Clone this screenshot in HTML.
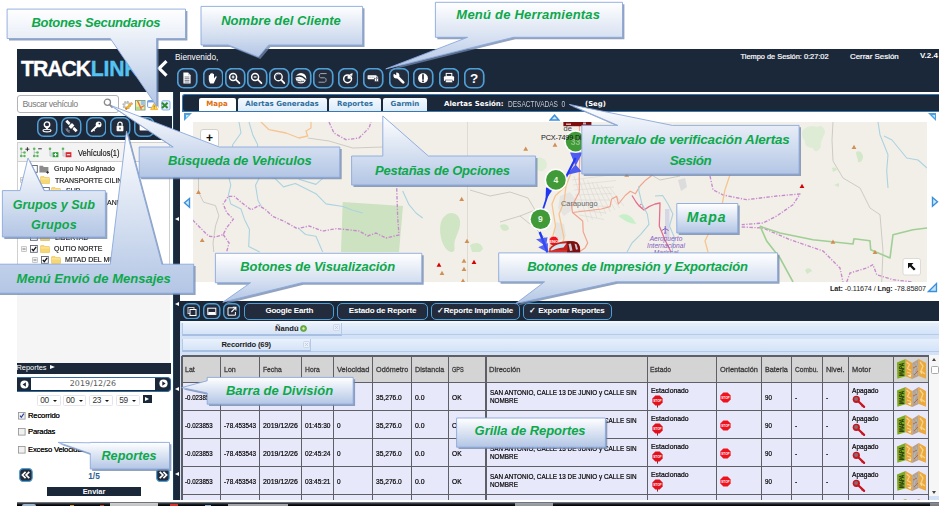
<!DOCTYPE html>
<html lang="es">
<head>
<meta charset="utf-8">
<title>TrackLink - Plataforma</title>
<style>
*{box-sizing:border-box;margin:0;padding:0}
html,body{width:941px;height:509px;overflow:hidden;background:#fff}
body{position:relative;font-family:"Liberation Sans",sans-serif;font-size:8px;color:#000}
.abs{position:absolute}
.navy{background:#1b283a}
#hdr{left:17px;top:49px;width:922px;height:43px}
#logo{left:21px;top:57.300px;font-weight:bold;font-size:21.200px;line-height:24px;color:#fff;letter-spacing:-1.050px;white-space:nowrap;-webkit-text-stroke:.35px currentColor}
#logo b{color:#55c3f1;letter-spacing:-.2px;margin-left:.8px}
.wt{color:#fff;white-space:nowrap}
.tb{position:absolute;top:68px;width:20px;height:20.5px;border:1.5px solid #4e9fd6;border-radius:6.5px;background:#232c3c}
.tb svg{position:absolute;left:0;top:0;width:17px;height:17.5px}
.lb{position:absolute;top:117px;width:20.5px;height:20px;border:1.5px solid #4e9fd6;border-radius:6.5px;background:#232c3c}
.lb svg{position:absolute;left:0;top:0;width:17.5px;height:17px}
.tab{position:absolute;top:98px;height:12.5px;border-radius:2px 2px 0 0;background:linear-gradient(#f4f9ff,#dcebfa);font-family:"DejaVu Sans","Liberation Sans",sans-serif;font-weight:bold;font-size:7.050px;line-height:12.500px;text-align:center;color:#2e6e9e;white-space:nowrap}
.tri{position:absolute;width:0;height:0}
</style>
</head>
<body>
<!-- header -->
<div id="hdr" class="abs navy"></div>
<div id="logo" class="abs">TRACK<b>LINK</b></div>
<svg class="abs" style="left:156px;top:60px" width="12" height="17" viewBox="0 0 12 17"><path d="M10.5 1.2 L3.2 8.3 L10.5 15.6" fill="none" stroke="#fff" stroke-width="3.2"/></svg>
<div class="abs wt" style="left:175px;top:52px;font-size:8.3px;line-height:10px">Bienvenido,</div>
<div class="abs wt" style="left:740.500px;top:51.900px;font-size:7.400px;line-height:10px;-webkit-text-stroke:.2px #fff">Tiempo de Sesión: 0:27:02</div>
<div class="abs wt" style="left:850px;top:52.400px;font-size:7.900px;line-height:10px;-webkit-text-stroke:.2px #fff">Cerrar Sesión</div>
<div class="abs wt" style="left:920px;top:51px;font-size:8px;line-height:10px;font-weight:bold">V.2.4</div>
<!--TOOLBAR-->
<svg class="abs" style="left:177px;top:68px" width="20.5" height="20.5" viewBox="0 0 20.5 20.5"><rect x=".75" y=".75" width="19" height="19" rx="6" fill="#232c3c" stroke="#4e9fd6" stroke-width="1.700"/><path d="M6.4 4.6h4.6l2.6 2.6v8.2H6.4z" fill="#fff"/><path d="M11 4.6v2.6h2.6" fill="#c9ccd2"/><path d="M7.6 9h4.8M7.6 10.7h4.8M7.6 12.4h4.8M7.6 14h4.8" stroke="#5a6270" stroke-width=".8"/></svg>
<svg class="abs" style="left:202.7px;top:68px" width="20.5" height="20.5" viewBox="0 0 20.5 20.5"><rect x=".75" y=".75" width="19" height="19" rx="6" fill="#232c3c" stroke="#4e9fd6" stroke-width="1.700"/><path d="M7.3 15.6c-.7-1.3-1.3-2.5-1.5-4.2V7.6c0-.9 1.1-.9 1.2 0V6.200c0-1 1.300-1 1.300 0V5.500c0-1 1.400-1 1.400 0v.8c0-.9 1.300-.9 1.300 0v4.300l1.500-2c.6-.7 1.500-.2 1.100.6l-2 4.300c-.3.800-.6 1.500-1 2.100z" fill="#fff"/></svg>
<svg class="abs" style="left:225px;top:68px" width="20.5" height="20.5" viewBox="0 0 20.5 20.5"><rect x=".75" y=".75" width="19" height="19" rx="6" fill="#232c3c" stroke="#4e9fd6" stroke-width="1.700"/><circle cx="8.100" cy="9" r="3.500" fill="none" stroke="#fff" stroke-width="1.500"/><path d="M10.900 11.700l3.500 3.500" stroke="#fff" stroke-width="1.800" stroke-linecap="round"/><path d="M6.700 9h2.800M8.100 7.600v2.800" stroke="#fff" stroke-width="1.100"/></svg>
<svg class="abs" style="left:247px;top:68px" width="20.5" height="20.5" viewBox="0 0 20.5 20.5"><rect x=".75" y=".75" width="19" height="19" rx="6" fill="#232c3c" stroke="#4e9fd6" stroke-width="1.700"/><circle cx="8.100" cy="9" r="3.500" fill="none" stroke="#fff" stroke-width="1.500"/><path d="M10.900 11.700l3.500 3.500" stroke="#fff" stroke-width="1.800" stroke-linecap="round"/><path d="M6.700 9h2.800" stroke="#fff" stroke-width="1.300"/></svg>
<svg class="abs" style="left:269px;top:68px" width="20.5" height="20.5" viewBox="0 0 20.5 20.5"><rect x=".75" y=".75" width="19" height="19" rx="6" fill="#232c3c" stroke="#4e9fd6" stroke-width="1.700"/><circle cx="9.400" cy="8.900" r="3.800" fill="none" stroke="#fff" stroke-width="1.400"/><path d="M12.300 11.900l3 3.300" stroke="#fff" stroke-width="1.800" stroke-linecap="round"/><path d="M6.900 7.800c.8-1.500 2.600-2 4-1.300" stroke="#9aa3b0" stroke-width=".8" fill="none"/></svg>
<svg class="abs" style="left:291px;top:68px" width="20.5" height="20.5" viewBox="0 0 20.5 20.5"><rect x=".75" y=".75" width="19" height="19" rx="6" fill="#232c3c" stroke="#4e9fd6" stroke-width="1.700"/><circle cx="10" cy="10.300" r="5.300" fill="#fff"/><path d="M5 8.900c3-1.500 7-.6 9.800 2.800" stroke="#232c3c" stroke-width="1.300" fill="none"/><path d="M5.500 12.900c2.500 1.200 5.300 1.200 7.600.2" stroke="#232c3c" stroke-width=".9" fill="none"/><path d="M5.300 10.700c2.200 0 4 .7 6.300 2.300" stroke="#98a1ae" stroke-width=".7" fill="none"/></svg>
<svg class="abs" style="left:313.2px;top:68px" width="20.5" height="20.5" viewBox="0 0 20.5 20.5"><rect x=".75" y=".75" width="19" height="19" rx="6" fill="#232c3c" stroke="#4e9fd6" stroke-width="1.700"/><path d="M13.6 5.600H7.800c-2 0-2 4.200 0 4.200h3.800c2 0 2 4.400 0 4.400H5.600" stroke="#a3a8b2" stroke-width="1" fill="none"/></svg>
<svg class="abs" style="left:337.8px;top:68px" width="20.5" height="20.5" viewBox="0 0 20.5 20.5"><rect x=".75" y=".75" width="19" height="19" rx="6" fill="#232c3c" stroke="#4e9fd6" stroke-width="1.700"/><circle cx="9.600" cy="10.800" r="3.900" fill="none" stroke="#fff" stroke-width="1.500"/><path d="M9.600 10.800V7.400a3.400 3.400 0 0 1 3.400 3.400z" fill="#fff"/><path d="M11.600 6.200l3-1.300-.5 3.300z" fill="#fff"/></svg>
<svg class="abs" style="left:363.3px;top:68px" width="20.5" height="20.5" viewBox="0 0 20.5 20.5"><rect x=".75" y=".75" width="19" height="19" rx="6" fill="#232c3c" stroke="#4e9fd6" stroke-width="1.700"/><rect x="4.600" y="7.200" width="8.800" height="4" rx=".6" fill="#fff"/><path d="M5.600 9.200h6.800" stroke="#8d95a3" stroke-width=".9" stroke-dasharray="1.100 .5"/><rect x="11.600" y="10.200" width="3.800" height="3.400" fill="#fff" stroke="#232c3c" stroke-width=".5"/><path d="M12.400 10.200v-.9c0-1.400 2.200-1.400 2.200 0v.9" stroke="#fff" stroke-width=".8" fill="none"/><circle cx="13.500" cy="11.900" r=".55" fill="#232c3c"/></svg>
<svg class="abs" style="left:388.5px;top:68px" width="20.5" height="20.5" viewBox="0 0 20.5 20.5"><rect x=".75" y=".75" width="19" height="19" rx="6" fill="#232c3c" stroke="#4e9fd6" stroke-width="1.700"/><path d="M8 8.200l6.200 6.200" stroke="#fff" stroke-width="2.700" stroke-linecap="round"/><circle cx="7.400" cy="7.600" r="3" fill="#fff"/><path d="M7.200 7.400L3.600 6l2.600-3.400z" fill="#232c3c" transform="rotate(12 7.400 7.600)"/></svg>
<svg class="abs" style="left:413.4px;top:68px" width="20.5" height="20.5" viewBox="0 0 20.5 20.5"><rect x=".75" y=".75" width="19" height="19" rx="6" fill="#232c3c" stroke="#4e9fd6" stroke-width="1.700"/><circle cx="10" cy="10.200" r="4.900" fill="#fff"/><path d="M10 6.800v4.300" stroke="#232c3c" stroke-width="1.700" stroke-linecap="round"/><circle cx="10" cy="13.300" r=".95" fill="#232c3c"/></svg>
<svg class="abs" style="left:438.9px;top:68px" width="20.5" height="20.5" viewBox="0 0 20.5 20.5"><rect x=".75" y=".75" width="19" height="19" rx="6" fill="#232c3c" stroke="#4e9fd6" stroke-width="1.700"/><rect x="7.200" y="5.400" width="5.600" height="3" fill="none" stroke="#fff" stroke-width="1"/><rect x="4.900" y="8.200" width="10.200" height="4.800" rx="1" fill="#fff"/><rect x="6.600" y="12" width="6.800" height="2.600" fill="#fff" stroke="#232c3c" stroke-width=".5"/></svg>
<svg class="abs" style="left:464.3px;top:68px" width="20.5" height="20.5" viewBox="0 0 20.5 20.5"><rect x=".75" y=".75" width="19" height="19" rx="6" fill="#232c3c" stroke="#4e9fd6" stroke-width="1.700"/><text x="10" y="15.200" text-anchor="middle" font-family="Liberation Sans,sans-serif" font-weight="bold" font-size="13.500" fill="#fff">?</text></svg>
<!--/TOOLBAR-->
<!-- left panel -->
<div class="abs" style="left:17px;top:94.5px;width:102px;height:18px;border:1.5px solid #b3b3b3;border-radius:3px;background:#fff"></div>
<div class="abs" style="left:22.500px;top:98.800px;font-size:8.800px;line-height:11px;color:#7a7a7a;letter-spacing:-.5px">Buscar vehículo</div>
<svg class="abs" style="left:102px;top:97px" width="12" height="12" viewBox="0 0 12 12"><circle cx="5.4" cy="5.3" r="3.1" fill="none" stroke="#8a8a8a" stroke-width="1.3"/><path d="M7.6 7.6 L10.6 10.6" stroke="#8a8a8a" stroke-width="1.6"/></svg>
<!--SMALLICONS-->
<svg class="abs" style="left:121.500px;top:99.500px" width="12" height="11" viewBox="0 0 12 11"><circle cx="4.800" cy="5.200" r="3.600" fill="#c9c9c9" stroke="#b5b5b5" stroke-width="1.600" stroke-dasharray="1.500 1.300"/><circle cx="4.800" cy="5.200" r="1.500" fill="#fff"/><path d="M3.600 9.200L10 3.200" stroke="#f0b323" stroke-width="2.300"/><path d="M3.600 9.200L5 8" stroke="#d9822b" stroke-width="2.300"/><path d="M9 4.100L10.400 2.800" stroke="#e8a0a0" stroke-width="2.300"/></svg>
<svg class="abs" style="left:134.800px;top:99.800px" width="11" height="11" viewBox="0 0 11 11"><rect x=".5" y=".5" width="9.500" height="9.500" fill="#d9efb0" stroke="#7f9c7a" stroke-width=".9"/><rect x="6" y="1" width="3.600" height="4" fill="#9cc3f0"/><rect x="1" y="1" width="3" height="5" fill="#f4ec8e"/><rect x="1" y="6.800" width="4" height="2.800" fill="#b5e08a"/><path d="M2.600 1L5.600 7.600L9.500 5.500M5.600 7.600L6.400 9.600" stroke="#f26b3c" stroke-width="1.300" fill="none"/></svg>
<svg class="abs" style="left:147.300px;top:100.300px" width="12" height="11" viewBox="0 0 12 11"><rect x=".6" y=".6" width="8.600" height="6.800" rx=".8" fill="#fff" stroke="#6f9fe0" stroke-width="1"/><rect x=".6" y=".6" width="8.600" height="1.800" fill="#6f9fe0"/><path d="M7.200 3.200L10.800 9.600H3.600z" fill="#ffd84a" stroke="#f2a52a" stroke-width=".8" stroke-linejoin="round"/><path d="M7.200 5.400v2.200M7.200 8.300v.6" stroke="#7a5a10" stroke-width=".8"/></svg>
<svg class="abs" style="left:160.800px;top:99.800px" width="10" height="11" viewBox="0 0 10 11"><rect x=".7" y=".7" width="8.300" height="9.300" rx="1.800" fill="#e1edfb" stroke="#8fb4e8" stroke-width="1.100"/><path d="M1 2.800L6.600 8M6.600 2.800L1 8" stroke="#2e8b2e" stroke-width="2"/></svg>
<!--/SMALLICONS-->
<div class="abs navy" style="left:17px;top:115.5px;width:155px;height:24.5px"></div>
<!--LEFTBTNS-->
<svg class="abs" style="left:37px;top:117px" width="20.500" height="20" viewBox="0 0 20.500 20"><rect x=".75" y=".75" width="19" height="18.500" rx="6" fill="#232c3c" stroke="#4e9fd6" stroke-width="1.500"/><circle cx="10" cy="7.600" r="2.700" fill="none" stroke="#fff" stroke-width="1.400"/><path d="M7.800 9.200L10 13.200L12.200 9.200" fill="#fff"/><ellipse cx="10" cy="13.600" rx="4" ry="1.300" fill="none" stroke="#fff" stroke-width="1.100"/></svg>
<svg class="abs" style="left:61.4px;top:117px" width="20.500" height="20" viewBox="0 0 20.500 20"><rect x=".75" y=".75" width="19" height="18.500" rx="6" fill="#232c3c" stroke="#4e9fd6" stroke-width="1.500"/><g transform="rotate(45 10.500 9)"><rect x="8.800" y="6.600" width="3.400" height="4.800" fill="#fff"/><rect x="3.200" y="7.600" width="4.600" height="2.800" fill="#fff"/><rect x="13.200" y="7.600" width="4.600" height="2.800" fill="#fff"/><path d="M7.800 9h1M12.200 9h1" stroke="#fff" stroke-width=".8"/></g><path d="M5 11.500c0 2.200 1.600 3.800 3.800 3.800M6.400 11.200c0 1.600 1 2.600 2.600 2.600" stroke="#8a929f" stroke-width=".8" fill="none"/><path d="M5 11.600c.2 2 1.600 3.400 3.600 3.600l-1.800-3z" fill="#7a828f"/></svg>
<svg class="abs" style="left:85.8px;top:117px" width="20.500" height="20" viewBox="0 0 20.500 20"><rect x=".75" y=".75" width="19" height="18.500" rx="6" fill="#232c3c" stroke="#4e9fd6" stroke-width="1.500"/><circle cx="12.600" cy="7.400" r="2.900" fill="#fff"/><circle cx="13.400" cy="6.600" r=".9" fill="#232c3c"/><path d="M11 9L5.800 14.200" stroke="#fff" stroke-width="1.900" stroke-linecap="round"/><path d="M7.400 12.800l1.300 1.300" stroke="#fff" stroke-width="1.200"/></svg>
<svg class="abs" style="left:110px;top:117px" width="20.500" height="20" viewBox="0 0 20.500 20"><rect x=".75" y=".75" width="19" height="18.500" rx="6" fill="#232c3c" stroke="#4e9fd6" stroke-width="1.500"/><rect x="6.600" y="8.800" width="6.800" height="5.400" rx=".6" fill="#fff"/><path d="M7.900 8.800V7.200c0-2.700 4.200-2.700 4.200 0v1.600" fill="none" stroke="#fff" stroke-width="1.300"/><rect x="9.400" y="10.600" width="1.200" height="1.800" fill="#232c3c"/></svg>
<svg class="abs" style="left:134.4px;top:117px" width="20.500" height="20" viewBox="0 0 20.500 20"><rect x=".75" y=".75" width="19" height="18.500" rx="6" fill="#232c3c" stroke="#4e9fd6" stroke-width="1.500"/><rect x="5.600" y="6.400" width="8.800" height="7" rx=".6" fill="#fff"/><path d="M5.800 6.800L10 10.400L14.200 6.800" stroke="#232c3c" stroke-width=".9" fill="none"/></svg>
<!--/LEFTBTNS-->
<!-- tree -->
<div class="abs" style="left:17px;top:142px;width:153px;height:220px;background:#fff;border:1px solid #d0d0d0"></div>
<div class="abs" style="left:17px;top:142px;width:153px;height:20px;background:#f3f3f3;border:1px solid #cfcfcf"></div>
<div class="abs" style="left:17px;top:270px;width:153px;height:92.500px;background:#f5f5f5"></div>
<!--TREE-->
<style>.tt{font-size:7.900px;line-height:10px;color:#111;white-space:nowrap;transform:scaleX(.885);transform-origin:0 50%;margin-top:.9px;-webkit-text-stroke:.15px #111}</style>
<svg class="abs" style="left:19px;top:146.500px" width="11" height="11" viewBox="0 0 11 11"><path d="M2.200 2v7M2.200 5.500h3.300M2.200 9h3.300" stroke="#9aa" stroke-width=".6" fill="none"/><circle cx="2.200" cy="1.800" r="1.300" fill="#5cb85c"/><circle cx="5.500" cy="5.500" r="1.300" fill="#5cb85c"/><circle cx="2.200" cy="9" r="1.300" fill="#5cb85c"/><circle cx="5.500" cy="9" r="1.200" fill="#5cb85c"/><path d="M6.400 2.200h4M8.400 .2v4" stroke="#222" stroke-width=".9"/></svg>
<svg class="abs" style="left:31.5px;top:146.500px" width="11" height="11" viewBox="0 0 11 11"><path d="M2.200 2v7M2.200 5.500h3.300M2.200 9h3.300" stroke="#9aa" stroke-width=".6" fill="none"/><circle cx="2.200" cy="1.800" r="1.300" fill="#5cb85c"/><circle cx="5.500" cy="5.500" r="1.300" fill="#5cb85c"/><circle cx="2.200" cy="9" r="1.300" fill="#5cb85c"/><circle cx="5.500" cy="9" r="1.200" fill="#5cb85c"/><path d="M6.200 1.800h3.600" stroke="#222" stroke-width=".9"/></svg>
<svg class="abs" style="left:48px;top:146.500px" width="11" height="11" viewBox="0 0 11 11"><path d="M2 2v7h2" stroke="#9aa" stroke-width=".6" fill="none"/><circle cx="2" cy="1.800" r="1.300" fill="#5cb85c"/><path d="M2.600 4.600l2.200 2.200l-2.200 2.200z" fill="#c9d4e4"/><rect x="4.600" y="5.200" width="5.800" height="5" fill="#2e9e3a"/><path d="M5.800 7.700h3.400M7.500 6v3.400" stroke="#fff" stroke-width="1"/></svg>
<svg class="abs" style="left:60.5px;top:146.500px" width="11" height="11" viewBox="0 0 11 11"><path d="M2 2v7h2" stroke="#9aa" stroke-width=".6" fill="none"/><circle cx="2" cy="1.800" r="1.300" fill="#5cb85c"/><path d="M2.600 4.600l2.200 2.200l-2.200 2.200z" fill="#c9d4e4"/><rect x="4.600" y="5.200" width="5.800" height="5" fill="#d9262c"/><path d="M5.800 7.700h3.400" stroke="#fff" stroke-width="1.100"/></svg>
<div class="abs" style="left:78.300px;top:148.100px;-webkit-text-stroke:.15px #111;font-size:8.300px;line-height:10px;color:#1a1a1a;white-space:nowrap;transform:scaleX(.9);transform-origin:0 50%">Vehículos(1)</div>
<svg class="abs" style="left:29.5px;top:164.5px" width="8" height="8" viewBox="0 0 8 8"><rect x=".5" y=".5" width="6.800" height="6.800" fill="#fff" stroke="#5b6470" stroke-width=".9"/></svg>
<svg class="abs" style="left:39px;top:164.500px" width="11" height="9" viewBox="0 0 11 9"><path d="M.4 .8h3.400l1 1.100h4.600v5.700H.4z" fill="#8c8c8c"/><path d="M8.600 6v2.800M7.200 7.400h2.800" stroke="#222" stroke-width=".8"/></svg>
<div class="abs tt" style="left:53.8px;top:163.3px;">Grupo No Asignado</div>
<svg class="abs" style="left:19.5px;top:177px" width="6" height="6" viewBox="0 0 6 6"><rect x=".4" y=".4" width="5.200" height="5.200" rx=".8" fill="#f4f4f4" stroke="#a9a9a9" stroke-width=".7"/><path d="M1.500 3h3" stroke="#555" stroke-width=".8"/></svg>
<svg class="abs" style="left:29.5px;top:176px" width="8" height="8" viewBox="0 0 8 8"><rect x=".5" y=".5" width="6.800" height="6.800" fill="#fff" stroke="#5b6470" stroke-width=".9"/></svg>
<svg class="abs" style="left:39.8px;top:176px" width="10" height="8" viewBox="0 0 10 8"><path d="M.5 1.200c0-.5.300-.8.800-.8h2.600l1 1.100h4c.4 0 .7.300.7.700v4.900c0 .4-.3.700-.7.700H1.200c-.4 0-.7-.3-.7-.7z" fill="#f7d774" stroke="#e2b93b" stroke-width=".5"/><path d="M.8 2.900h8.500" stroke="#fff5c8" stroke-width=".7" opacity=".9"/></svg>
<div class="abs tt" style="left:54.5px;top:174.9px;">TRANSPORTE CILIND</div>
<svg class="abs" style="left:42px;top:186.5px" width="8" height="8" viewBox="0 0 8 8"><rect x=".5" y=".5" width="6.800" height="6.800" fill="#fff" stroke="#5b6470" stroke-width=".9"/></svg>
<svg class="abs" style="left:51px;top:186.8px" width="10" height="8" viewBox="0 0 10 8"><path d="M.5 1.200c0-.5.300-.8.800-.8h2.600l1 1.100h4c.4 0 .7.300.7.700v4.900c0 .4-.3.700-.7.700H1.200c-.4 0-.7-.3-.7-.7z" fill="#f7d774" stroke="#e2b93b" stroke-width=".5"/><path d="M.8 2.900h8.500" stroke="#fff5c8" stroke-width=".7" opacity=".9"/></svg>
<div class="abs tt" style="left:65.7px;top:185.6px;">SUB</div>
<svg class="abs" style="left:42px;top:198px" width="8" height="8" viewBox="0 0 8 8"><rect x=".5" y=".5" width="6.800" height="6.800" fill="#fff" stroke="#5b6470" stroke-width=".9"/></svg>
<svg class="abs" style="left:51px;top:198.3px" width="10" height="8" viewBox="0 0 10 8"><path d="M.5 1.200c0-.5.300-.8.800-.8h2.600l1 1.100h4c.4 0 .7.300.7.700v4.900c0 .4-.3.700-.7.700H1.200c-.4 0-.7-.3-.7-.7z" fill="#f7d774" stroke="#e2b93b" stroke-width=".5"/><path d="M.8 2.900h8.500" stroke="#fff5c8" stroke-width=".7" opacity=".9"/></svg>
<div class="abs tt" style="left:106.500px;top:197px;">ANE</div>
<svg class="abs" style="left:30px;top:233px" width="8" height="8" viewBox="0 0 8 8"><rect x=".5" y=".5" width="6.800" height="6.800" fill="#fff" stroke="#5b6470" stroke-width=".9"/></svg>
<svg class="abs" style="left:39.5px;top:233.3px" width="10" height="8" viewBox="0 0 10 8"><path d="M.5 1.200c0-.5.300-.8.800-.8h2.600l1 1.100h4c.4 0 .7.300.7.700v4.900c0 .4-.3.700-.7.700H1.200c-.4 0-.7-.3-.7-.7z" fill="#e9cf7a" stroke="#caa43a" stroke-width=".5"/><path d="M.8 2.900h8.500" stroke="#fff5c8" stroke-width=".7" opacity=".9"/></svg>
<div class="abs tt" style="left:54.5px;top:232px;">LIBERTAD</div>
<svg class="abs" style="left:20.5px;top:245.5px" width="6" height="6" viewBox="0 0 6 6"><rect x=".4" y=".4" width="5.200" height="5.200" rx=".8" fill="#f4f4f4" stroke="#a9a9a9" stroke-width=".7"/><path d="M1.500 3h3" stroke="#555" stroke-width=".8"/></svg>
<svg class="abs" style="left:29.5px;top:244.5px" width="8" height="8" viewBox="0 0 8 8"><rect x=".5" y=".5" width="6.800" height="6.800" fill="#fff" stroke="#5b6470" stroke-width=".9"/><path d="M1.800 3.800L3.300 5.600L6.200 1.800" fill="none" stroke="#111" stroke-width="1.300"/></svg>
<svg class="abs" style="left:39.5px;top:244.8px" width="10" height="8" viewBox="0 0 10 8"><path d="M.5 1.200c0-.5.300-.8.800-.8h2.600l1 1.100h4c.4 0 .7.300.7.700v4.900c0 .4-.3.700-.7.700H1.200c-.4 0-.7-.3-.7-.7z" fill="#f7d774" stroke="#e2b93b" stroke-width=".5"/><path d="M.8 2.900h8.500" stroke="#fff5c8" stroke-width=".7" opacity=".9"/></svg>
<div class="abs tt" style="left:54.2px;top:243.3px;">QUTIO NORTE</div>
<svg class="abs" style="left:31.5px;top:256.5px" width="6" height="6" viewBox="0 0 6 6"><rect x=".4" y=".4" width="5.200" height="5.200" rx=".8" fill="#f4f4f4" stroke="#a9a9a9" stroke-width=".7"/><path d="M1.500 3h3" stroke="#555" stroke-width=".8"/></svg>
<svg class="abs" style="left:40.5px;top:255.5px" width="8" height="8" viewBox="0 0 8 8"><rect x=".5" y=".5" width="6.800" height="6.800" fill="#fff" stroke="#5b6470" stroke-width=".9"/><path d="M1.800 3.800L3.300 5.600L6.200 1.800" fill="none" stroke="#111" stroke-width="1.300"/></svg>
<svg class="abs" style="left:50.5px;top:255.8px" width="10" height="8" viewBox="0 0 10 8"><path d="M.5 1.200c0-.5.300-.8.800-.8h2.600l1 1.100h4c.4 0 .7.300.7.700v4.900c0 .4-.3.700-.7.700H1.200c-.4 0-.7-.3-.7-.7z" fill="#f7d774" stroke="#e2b93b" stroke-width=".5"/><path d="M.8 2.900h8.500" stroke="#fff5c8" stroke-width=".7" opacity=".9"/></svg>
<div class="abs tt" style="left:65.3px;top:254.2px;">MITAD DEL MU</div>
<!--/TREE-->
<!-- reportes panel -->
<div class="abs navy" style="left:17px;top:362.5px;width:155px;height:11px"></div>
<div class="abs wt" style="left:16.500px;top:362.800px;font-size:7.400px;line-height:10px">Reportes</div>
<div class="tri" style="left:50px;top:365.300px;border-left:5.200px solid #fff;border-top:2.900px solid transparent;border-bottom:2.900px solid transparent"></div>
<!--REPORTS-->
<div class="abs" style="left:17px;top:376.500px;width:153.500px;height:15px;background:#1b283a;border:1.200px solid #2f6da3;border-left:none;border-radius:0 4px 4px 0"></div>
<div class="abs" style="left:31px;top:378px;width:124px;height:12px;background:#fff;font-family:'DejaVu Sans','Liberation Sans',sans-serif;font-size:7.900px;line-height:12px;text-align:center;color:#555;letter-spacing:.1px">2019/12/26</div>
<svg class="abs" style="left:19.500px;top:379.500px" width="9" height="9" viewBox="0 0 9 9"><circle cx="4.500" cy="4.500" r="4.100" fill="#fff"/><path d="M5.900 2.300v4.400L2.600 4.500z" fill="#1b283a"/></svg>
<svg class="abs" style="left:158.600px;top:379.200px" width="9" height="9" viewBox="0 0 9 9"><circle cx="4.500" cy="4.500" r="4.100" fill="#fff"/><path d="M3.300 2.300v4.400L6.600 4.500z" fill="#1b283a"/></svg>
<div class="abs" style="left:37px;top:395px;width:23.500px;height:11.300px;border:1px solid #e4e4ee;border-radius:1.500px;background:#fff;font-size:8.300px;line-height:9.500px;color:#333;padding-left:2.200px;letter-spacing:-.3px">00</div>
<div class="tri" style="left:52.8px;top:399.800px;border-top:2.600px solid #111;border-left:2.200px solid transparent;border-right:2.200px solid transparent"></div>
<div class="abs" style="left:62.7px;top:395px;width:23.500px;height:11.300px;border:1px solid #e4e4ee;border-radius:1.500px;background:#fff;font-size:8.300px;line-height:9.500px;color:#333;padding-left:2.200px;letter-spacing:-.3px">00</div>
<div class="tri" style="left:78.5px;top:399.800px;border-top:2.600px solid #111;border-left:2.200px solid transparent;border-right:2.200px solid transparent"></div>
<div class="abs" style="left:89.3px;top:395px;width:23.500px;height:11.300px;border:1px solid #e4e4ee;border-radius:1.500px;background:#fff;font-size:8.300px;line-height:9.500px;color:#333;padding-left:2.200px;letter-spacing:-.3px">23</div>
<div class="tri" style="left:105.1px;top:399.800px;border-top:2.600px solid #111;border-left:2.200px solid transparent;border-right:2.200px solid transparent"></div>
<div class="abs" style="left:116px;top:395px;width:23.500px;height:11.300px;border:1px solid #e4e4ee;border-radius:1.500px;background:#fff;font-size:8.300px;line-height:9.500px;color:#333;padding-left:2.200px;letter-spacing:-.3px">59</div>
<div class="tri" style="left:131.8px;top:399.800px;border-top:2.600px solid #111;border-left:2.200px solid transparent;border-right:2.200px solid transparent"></div>
<div class="abs navy" style="left:142.500px;top:394.700px;width:9px;height:8.800px"></div><div class="tri" style="left:145.200px;top:396.700px;border-left:4.400px solid #fff;border-top:2.400px solid transparent;border-bottom:2.400px solid transparent"></div>
<svg class="abs" style="left:18px;top:411.90000000000003px" width="8" height="8" viewBox="0 0 8 8"><rect x=".5" y=".5" width="6.600" height="6.600" fill="#f1f1f1" stroke="#8e8f8f" stroke-width=".8"/><path d="M2 3.600L3.300 5.400L5.800 1.600" fill="none" stroke="#2b3f9c" stroke-width="1.100"/></svg>
<div class="abs" style="left:28px;top:411.0px;font-size:7.600px;line-height:10px;color:#111;white-space:nowrap;text-shadow:0 0 .2px #111;letter-spacing:-.15px">Recorrido</div>
<svg class="abs" style="left:18px;top:428.3px" width="8" height="8" viewBox="0 0 8 8"><rect x=".5" y=".5" width="6.600" height="6.600" fill="#f1f1f1" stroke="#8e8f8f" stroke-width=".8"/></svg>
<div class="abs" style="left:28px;top:427.4px;font-size:7.600px;line-height:10px;color:#111;white-space:nowrap;text-shadow:0 0 .2px #111;letter-spacing:-.15px">Paradas</div>
<svg class="abs" style="left:18px;top:445.6px" width="8" height="8" viewBox="0 0 8 8"><rect x=".5" y=".5" width="6.600" height="6.600" fill="#f1f1f1" stroke="#8e8f8f" stroke-width=".8"/></svg>
<div class="abs" style="left:28px;top:444.7px;font-size:7.600px;line-height:10px;color:#111;white-space:nowrap;text-shadow:0 0 .2px #111;letter-spacing:-.15px">Exceso Velocidad</div>
<svg class="abs" style="left:19px;top:468px" width="14" height="14" viewBox="0 0 14 14"><rect x=".6" y=".6" width="12.600" height="12.800" rx="3.600" fill="#232c3c" stroke="#4e9fd6" stroke-width="1.200"/><path d="M6.600 3.800L3.400 7L6.600 10.200M10.300 3.800L7.100 7L10.300 10.200" fill="none" stroke="#fff" stroke-width="1.700"/></svg>
<svg class="abs" style="left:155.600px;top:468px" width="14" height="14" viewBox="0 0 14 14"><rect x=".6" y=".6" width="12.600" height="12.800" rx="3.600" fill="#232c3c" stroke="#4e9fd6" stroke-width="1.200"/><path d="M3.700 3.800L6.900 7L3.700 10.200M7.400 3.800L10.600 7L7.400 10.200" fill="none" stroke="#fff" stroke-width="1.700"/></svg>
<div class="abs" style="left:84px;top:470.500px;width:20px;text-align:center;font-weight:bold;font-size:8.300px;line-height:10px;color:#2c5f92">1/5</div>
<div class="abs navy wt" style="left:47px;top:487px;width:94px;height:8.700px;font-weight:bold;font-size:7.400px;line-height:9.800px;text-align:center">Enviar</div>
<!--/REPORTS-->
<!-- vertical divider -->
<div class="abs" style="left:172.200px;top:92px;width:1.200px;height:50px;background:#fff"></div><div class="abs" style="left:170.500px;top:140px;width:3px;height:362px;background:#fff"></div>
<div class="abs navy" style="left:173.300px;top:92px;width:6.500px;height:410px;border-left:1px solid #173f5f"></div>
<!--DIVARROWS-->
<div class="tri" style="left:174.800px;top:217px;border-right:4.300px solid #fff;border-top:2.800px solid transparent;border-bottom:2.800px solid transparent"></div><div class="tri" style="left:174.800px;top:302.400px;border-right:4.300px solid #fff;border-top:2.800px solid transparent;border-bottom:2.800px solid transparent"></div><div class="tri" style="left:174.800px;top:386.900px;border-right:4.300px solid #fff;border-top:2.800px solid transparent;border-bottom:2.800px solid transparent"></div><div class="tri" style="left:174.800px;top:472.200px;border-right:4.300px solid #fff;border-top:2.800px solid transparent;border-bottom:2.800px solid transparent"></div>
<!--/DIVARROWS-->
<!-- tab bar -->
<div class="abs" style="left:179.800px;top:91.700px;width:759.200px;height:2px;background:#fff"></div><div class="abs" style="left:181.500px;top:93.600px;width:757.500px;height:18.200px;background:#3a78b0;border-radius:2.500px 0 0 0"></div>
<div class="abs navy" style="left:183.200px;top:95px;width:755.800px;height:15.500px;border-radius:2px 0 0 2px"></div>
<div class="tab" style="left:198.5px;width:37px;color:#e0700f;background:#fff">Mapa</div>
<div class="tab" style="left:237.5px;width:89px">Alertas Generadas</div>
<div class="tab" style="left:329px;width:52px">Reportes</div>
<div class="tab" style="left:383px;width:44px">Garmin</div>
<div class="abs wt" style="left:444px;top:98.500px;font-family:'DejaVu Sans','Liberation Sans',sans-serif;font-weight:bold;font-size:7px;line-height:11px">Alertas Sesión:</div>
<div class="abs" style="left:507.500px;top:98.500px;font-size:8.400px;line-height:11px;color:#c4cad3;white-space:nowrap;transform:scaleX(.78);transform-origin:0 50%">DESACTIVADAS&nbsp; 0</div>
<div class="abs wt" style="left:585px;top:98.500px;font-family:'DejaVu Sans','Liberation Sans',sans-serif;font-weight:bold;font-size:6.900px;line-height:11px">(Seg)</div>
<!--MAP-->
<svg class="abs" style="left:193px;top:122px" width="734" height="160" viewBox="193 122 734 160"><rect x="193" y="122" width="734" height="160" fill="#f2efe9"/>
<path d="M342.7 202 L403 206 L399 252 L341 252z" fill="#cde2c0"/>
<path d="M441 222c3-9 12-12 17-6c5 7 0 16-3 24c-2 7 2 12-4 12c-8-2-13-18-10-30z" fill="#cfe5c4"/>
<path d="M470 245c6-4 12-2 13 4l-3 3h-8z M500 225c5-2 9 0 9 4c-3 3-8 3-9-4z" fill="#d3e8c9"/>
<path d="M803 130c4-4 10-5 14-3c5-3 8 2 8 6c-2 5-5 9-4 14c-3 5-7 6-8 1c-4 0-9-2-8-7c-3-3-4-8-2-11z" fill="#d9ebd0" opacity=".8"/>
<path d="M856 152c3-2 6 0 7 4c0 4-2 7-5 6c0-4-2-6-2-10z M832 168c3-1 5 0 5 2l-4 2z M834 185l5-2l0 4z M805 270c3-3 6-2 7 1l-5 3z" fill="#d3e8c9"/>
<path d="M574.0 176.0L588.0 222 M578.5 177.5L592.5 220 M583.0 179.0L597.0 218 M587.5 180.5L601.5 216 M592.0 182.0L606.0 214 M596.5 183.5L610.5 212 M601.0 185.0L615.0 210 M605.5 186.5L619.5 208 M610.0 188.0L624.0 206 M572 180L618 174.0 M573 185L616 180.5 M574 190L614 187.0 M575 195L612 193.5 M576 200L610 200.0 M577 205L608 206.5 M578 210L606 213.0 M579 215L604 219.5" fill="none" stroke="#dad7d2" stroke-width=".6"/>
<path d="M560 196l10-4l6 8l-4 10l-8 6l-6-8z M556 222l8 2l2 12l-8 6l-4-10z" fill="#e6e4e1"/>
<path d="M678 180l7-2l2 9l-6 4z" fill="#dcdcdc"/>
<path d="M665 209h4.500v29h-4.500z" fill="#d6d6e6"/>
<path d="M618.400 216c5-3 10-2 14 2l4 6c-6 0-12-3-18-8z" fill="#c8f0c8"/>
<path d="M533 160c4-4 10-3 13 1c2 4 0 9-4 10c-5 1-10-5-9-11z" fill="#d8ecd0" opacity=".8"/>
<path d="M467.500 122V282" stroke="#dedbd5" stroke-width="1"/>
<path d="M307.7 138 L329 141 L352.7 148 L383 147" fill="none" stroke="#c4c0ba" stroke-width=".8"/>
<path d="M198.5 160 L198.5 178.4 L198.5 192 L203.6 202.2 L215.5 205.6 L218.9 215.8 L215.5 226 L213 243 L213.8 252" fill="none" stroke="#c4c0ba" stroke-width=".8"/>
<path d="M833 122 L832 140 L833 161 L843 178 L860 188 L870 208 L880 214.7 L883 251 L881.7 282" fill="none" stroke="#c4c0ba" stroke-width=".8"/>
<path d="M470 190 L490 196 L510 192 L528 198 L535 210 L520 216 L500 222" fill="none" stroke="#c4c0ba" stroke-width=".8"/>
<path d="M520 216 L535 228 L545 238" fill="none" stroke="#c4c0ba" stroke-width=".8"/>
<path d="M600 160 L620 170 L640 168 L660 180 L680 176" fill="none" stroke="#c4c0ba" stroke-width=".8"/>
<path d="M239 122 L241 133 L232.7 144.7 L231 160 L229.1 178.4 L230.8 185.2 L228.3 195.4 L230.8 203.9 L241 209 L244.4 219.2 L249.5 229.4 L248.7 246.4 L259.7 252" fill="none" stroke="#aad3df" stroke-width="1.100" stroke-linejoin="round"/>
<path d="M249 122 L252.7 134.7 L257.7 144.7 L255 165 L258.9 178.4 L255.5 185.2 L258 200.5 L261.4 206.5" fill="none" stroke="#aad3df" stroke-width="1.100" stroke-linejoin="round"/>
<path d="M266 176 L275 178.4 L283.5 186.9 L295.4 183.5 L315.9 193.7 L326 203.9 L343 206.5 L352 210 L362.7 213" fill="none" stroke="#aad3df" stroke-width="1.100" stroke-linejoin="round"/>
<path d="M298.8 179.3 L315.9 184.4 L322.7 178.4" fill="none" stroke="#aad3df" stroke-width="1.100" stroke-linejoin="round"/>
<path d="M298.8 228.6 L305.6 234.5 L315.9 236.2 L322.7 252" fill="none" stroke="#aad3df" stroke-width="1.100" stroke-linejoin="round"/>
<path d="M402.7 191 L409 204.7 L416 213 L422.7 218" fill="none" stroke="#aad3df" stroke-width="1.100" stroke-linejoin="round"/>
<path d="M878 122 L880 134.7 L888 154.7 L886.7 171 L888 188" fill="none" stroke="#aad3df" stroke-width="1.100" stroke-linejoin="round"/>
<path d="M884 136 L892 140 L906.7 158 L918 160 L927 168" fill="none" stroke="#aad3df" stroke-width="1.100" stroke-linejoin="round"/>
<path d="M193 150 L200 160 L196 175" fill="none" stroke="#aad3df" stroke-width="1.100" stroke-linejoin="round"/>
<path d="M640 122 L648 135 L660 140" fill="none" stroke="#aad3df" stroke-width="1.100" stroke-linejoin="round"/>
<path d="M192.6 220 L200.2 227.7 L208.7 236.2 L215.5 237 L223.2 234.5 L226.6 227.7 L233.4 219.2 L226.6 212.4 L223.2 203.9 L228.3 196.3 L234.2 196.3 L241 202.2 L251.2 209.9 L258.9 205.6 L264.8 209 L273.3 216.7 L285.2 221.8 L297.1 228.6 L309 226 L322.7 231.1 L336.3 228.6 L349 229.8 L359 231 L367.7 236 L376 233 L386 238 L399 235 L397.7 218 L396.7 188" fill="none" stroke="#c78bcd" stroke-width="1.350" stroke-dasharray="3.500 1.500 1.200 1.500" stroke-linejoin="round"/>
<path d="M223.2 234.5 L229.1 243 L226.6 252" fill="none" stroke="#c78bcd" stroke-width="1.350" stroke-dasharray="3.500 1.500 1.200 1.500" stroke-linejoin="round"/>
<path d="M329 122 L334 133 L346 139.7 L359 138 L369 128 L371 122" fill="none" stroke="#c78bcd" stroke-width="1.350" stroke-dasharray="3.500 1.500 1.200 1.500" stroke-linejoin="round"/>
<path d="M710 176 L713 189.7 L723 195 L746.7 199.7 L776.7 196 L800 194 L793 204.7 L776.7 216 L763 223 L741.7 224.7" fill="none" stroke="#c78bcd" stroke-width="1.350" stroke-dasharray="3.500 1.500 1.200 1.500" stroke-linejoin="round"/>
<path d="M741.7 227 L763 228 L790 239.7 L823 251 L840 268 L843 282" fill="none" stroke="#c78bcd" stroke-width="1.350" stroke-dasharray="3.500 1.500 1.200 1.500" stroke-linejoin="round"/>
<path d="M846.7 282 L850 273 L866.7 268 L873 264.7 L876.7 274.7 L893 279.7 L913 282" fill="none" stroke="#c78bcd" stroke-width="1.350" stroke-dasharray="3.500 1.500 1.200 1.500" stroke-linejoin="round"/>
<path d="M760 226.3 L780 233 L813 239.7 L853 244 L854 238.7 L870 240.7 L870.7 249.7 L890 258 L893 234.7 L913 229.7 L927 228" fill="none" stroke="#9fcf94" stroke-width="1.600" stroke-linejoin="round"/>
<path d="M760 226 L766.7 241 L780 258 L793 282" fill="none" stroke="#9fcf94" stroke-width="1.600"/>
<path d="M261 122 L269 129.7 L286 133 L299 138 L307.7 136 L306 131 L311 128 L311 122" fill="none" stroke="#f6c58f" stroke-width="1.300" stroke-linejoin="round"/>
<path d="M576 160 L566 186 L555.5 195.5 L552 204 L555.5 226 L548.7 252" fill="none" stroke="#f6c58f" stroke-width="1.300" stroke-linejoin="round"/>
<path d="M566 186 L564 202 L559 214 L561.5 226 L564 238 L560 252" fill="none" stroke="#f6c58f" stroke-width="1.300" stroke-linejoin="round"/>
<path d="M730 174.7 L725 189.7 L722 205 L714 222 L705 241 L708 252" fill="none" stroke="#f6c58f" stroke-width="1.300" stroke-linejoin="round"/>
<path d="M579.3 122 L580 150 L579.3 170 L579.3 192 L571.7 206.6 L572.5 212.5 L582.7 221 L583.2 231.7 L587.7 242.9 L585 248 L579 252" fill="none" stroke="#f0a58e" stroke-width="1.200" stroke-linejoin="round"/>
<path d="M572.5 212.5 L601.4 209 L610 206.6 L611.6 199 L616.7 196.4 L618.4 204 L625.2 195.5 L630.3 191.3 L635.4 193.8 L640 186 L645.6 180.2 L652.4 175" fill="none" stroke="#f0a58e" stroke-width="1.200" stroke-linejoin="round"/>
<path d="M590 122 L592 135 L600 146" fill="none" stroke="#f0a58e" stroke-width="1.200" stroke-linejoin="round"/>
<path d="M632 195.5 L636 202 L638.8 205.7 L644 210 L649 206.6 L655 204 L660 203 L659.3 226 L665 240 L671 252" fill="none" stroke="#e2708e" stroke-width="1.300" stroke-linejoin="round"/>
<ellipse cx="641.600" cy="206.200" rx="1.300" ry="2.300" transform="rotate(-35 641.600 206.200)" fill="none" stroke="#e2708e" stroke-width=".9"/>
<path d="M638.8 186 L638.8 190.4 L642 204 L647.3 214 L649 224.4 L640.5 234.6 L632 243 L627 252" fill="none" stroke="#aad3df" stroke-width="1.100" stroke-linejoin="round"/>
<path d="M655 196 L662.7 195.5 L668 204 L672.9 214 L669.5 226 L674.6 238 L672 252" fill="none" stroke="#aad3df" stroke-width="1.100" stroke-linejoin="round"/>
<path d="M570 152.500L582.500 152.500L575.600 166z M575.600 164.500L581.500 171.500L566.500 175z" fill="#3a4cf5" opacity=".9"/><path d="M575.600 158L564 181" stroke="#2138f2" stroke-width="2.200"/>
<path d="M546 187.500L553.500 188.500L545.500 200z" fill="#2138f2"/><path d="M548 194L542.800 210" stroke="#2138f2" stroke-width="1.800"/>
<path d="M539.700 232L547.500 252.500" stroke="#2138f2" stroke-width="2.400"/><path d="M536 239.200L547.500 237.300L546 246.600z M538.200 247.300L547.900 242.900L547.900 252.500z" fill="#3a4cf5" opacity=".85"/>
<path d="M563.400 122h28v4.200h-28z" fill="#7d0e0e"/><path d="M566 123.500h5v1.600h-5z M583 122.500h3v2h-3z" fill="#e9d4d4" opacity=".8"/>
<circle cx="575.6" cy="141.6" r="11.300" fill="#fff" opacity=".92"/><circle cx="575.6" cy="141.6" r="9.800" fill="#3f9a37"/><text x="575.6" y="144.6" text-anchor="middle" font-family="Liberation Sans,sans-serif" font-size="8.600" font-weight="bold" fill="#e8f5e4" opacity="0.45">33</text>
<circle cx="555.9" cy="179.9" r="11.300" fill="#fff" opacity=".92"/><circle cx="555.9" cy="179.9" r="9.800" fill="#3f9a37"/><text x="555.9" y="182.9" text-anchor="middle" font-family="Liberation Sans,sans-serif" font-size="8.600" font-weight="bold" fill="#e8f5e4" opacity="1">4</text>
<circle cx="540.5" cy="219.3" r="11.300" fill="#fff" opacity=".92"/><circle cx="540.5" cy="219.3" r="9.800" fill="#3f9a37"/><text x="540.5" y="222.3" text-anchor="middle" font-family="Liberation Sans,sans-serif" font-size="8.600" font-weight="bold" fill="#e8f5e4" opacity="1">9</text>
<circle cx="553.800" cy="241" r="4.800" fill="#f0121d" stroke="#fff" stroke-width=".6"/><text x="553.800" y="242.500" text-anchor="middle" font-family="Liberation Sans,sans-serif" font-size="4.200" font-weight="bold" fill="#fff">ENO</text>
<path d="M549 252.500l.5-4c2-3 6-5.500 11-6.500c5-1 11-1.300 15-.2c3 1 4.500 4 4.700 7.200v3.500z" fill="#c4201c"/><path d="M550.500 249.500c2-3 6-5 10-5.800l6-.5l-3 4.300c-5 .5-9 1.500-12.500 3.500z" fill="#cfe6f5"/><path d="M566.500 241.800c4-.8 8-.5 10.500.7c2 1.500 3 4.500 3 7v3h-13c1-4 1-7-.5-10.700z" fill="#7d0f0f"/><path d="M568.500 244l2.500-.5l1.500 7l-2.500.5z M574.500 243.500l2 .8l1.500 5l-2 .5z" fill="#d5e8f4" opacity=".85"/><path d="M550 251h17" stroke="#e2453c" stroke-width="1"/>
<text x="541" y="139.600" font-family="Liberation Sans,sans-serif" font-size="7.300" fill="#151515" letter-spacing="-.2">PCX-7499 Dia</text>
<text x="563.500" y="130.500" font-family="Liberation Sans,sans-serif" font-size="7.500" fill="#444">de</text>
<text x="561" y="205.600" font-family="Liberation Sans,sans-serif" font-size="7.400" fill="#666">Carapungo</text>
<g font-family="Liberation Sans,sans-serif" font-size="6.600" font-style="italic" fill="#8461c4" text-anchor="middle"><text x="666" y="241.200">Aeropuerto</text><text x="666" y="248">Internacional</text><text x="666" y="254.800">Mariscal</text></g>
<path d="M665.200 226v7M661.800 230.500l3.400-2l3.400 2M664 233.200h2.400" stroke="#8461c4" stroke-width="1" fill="none"/>
<path d="M196.1 194L198.5 189.8L200.9 194z" fill="#d08f55"/>
<path d="M199.79999999999998 242.1L202.2 237.9L204.6 242.1z" fill="#d08f55"/>
<path d="M523.3000000000001 150.7L525.7 146.5L528.1 150.7z" fill="#d08f55"/>
<path d="M552.6 146.7L555 142.5L557.4 146.7z" fill="#d08f55"/>
<path d="M459.3 201L461.7 196.8L464.09999999999997 201z" fill="#d08f55"/>
<path d="M464.6 243L467 238.8L469.4 243z" fill="#d08f55"/>
<path d="M461.6 262.7L464 258.5L466.4 262.7z" fill="#d08f55"/>
<path d="M439.6 275L442 270.8L444.4 275z" fill="#d08f55"/>
<path d="M461.6 271L464 266.8L466.4 271z" fill="#d08f55"/>
<path d="M460.6 282.7L463 278.5L465.4 282.7z" fill="#d08f55"/>
<path d="M624.3000000000001 176.7L626.7 172.5L629.1 176.7z" fill="#d08f55"/>
<path d="M851.6 149L854 144.8L856.4 149z" fill="#d08f55"/>
<path d="M830.6 243.7L833 239.5L835.4 243.7z" fill="#d08f55"/>
<path d="M872.6 254L875 249.8L877.4 254z" fill="#d08f55"/>
<path d="M436.6 266.7L439 262.5L441.4 266.7z" fill="#d40000"/>
<path d="M471.6 264L474 259.8L476.4 264z" fill="#d40000"/>
<path d="M799.6 188L802 183.8L804.4 188z" fill="#d40000"/>
<rect x="200.500" y="129.500" width="18" height="18" rx="2.500" fill="#fff" stroke="#c9c6c0" stroke-width=".8"/><text x="209.600" y="142.300" text-anchor="middle" font-family="Liberation Sans,sans-serif" font-size="12" font-weight="bold" fill="#111">+</text>
<rect x="903" y="258.500" width="17.500" height="16.500" rx="2" fill="#fff" stroke="#d2cfca" stroke-width=".7"/><path d="M908 263h5.500l-1.900 1.900l4 4l-1.700 1.700l-4-4l-1.900 1.900z" fill="#111"/></svg>
<div class="tri" style="left:183.500px;top:113px;border-top:8px solid #4f9fe0;border-right:8.500px solid transparent"></div>
<div class="tri" style="left:185.800px;top:114.800px;border-top:3.600px solid #b9ecff;border-right:3.800px solid transparent"></div>
<div class="tri" style="left:927.500px;top:113px;border-top:8px solid #4f9fe0;border-left:8.500px solid transparent"></div>
<div class="tri" style="left:931.500px;top:114.800px;border-top:3.600px solid #b9ecff;border-left:3.800px solid transparent"></div>
<svg class="abs" style="left:548.500px;top:113.500px" width="11" height="7" viewBox="0 0 11 7"><path d="M1.200 6L5.500 1.200L9.800 6z" fill="#cfe9fb" stroke="#3c8fdb" stroke-width="1.500"/></svg>
<svg class="abs" style="left:182.500px;top:197px" width="8" height="12" viewBox="0 0 8 12"><path d="M6.500 1.500L1.500 5.800L6.500 10.200z" fill="#cfe9fb" stroke="#3c8fdb" stroke-width="1.400"/></svg>
<svg class="abs" style="left:931px;top:196px" width="8" height="12" viewBox="0 0 8 12"><path d="M1.500 1.500L6.500 5.800L1.500 10.200z" fill="#cfe9fb" stroke="#3c8fdb" stroke-width="1.400"/></svg>
<svg class="abs" style="left:927px;top:282px" width="11" height="11" viewBox="0 0 11 11"><path d="M9.500 1.500V9.500H1.500z" fill="#bfe3fb" stroke="#3c8fdb" stroke-width="1.300"/></svg>
<div class="abs" style="left:826px;top:283.500px;width:100px;text-align:right;font-size:7.200px;line-height:10px;color:#222;white-space:nowrap;letter-spacing:-.1px"><b>Lat:</b> -0.11674 / <b>Lng:</b> -78.85807</div>
<!--/MAP-->
<!--GRID-->
<style>.gh{font-size:7.700px;line-height:10px;color:#3c3c3c;white-space:nowrap;-webkit-text-stroke:.3px #3c3c3c;transform-origin:0 50%}.gc{font-size:7.700px;line-height:10px;color:#000;white-space:nowrap;transform-origin:0 50%;-webkit-text-stroke:.22px #000}</style><div class="abs" style="left:179.800px;top:321px;width:759.200px;height:181px;background:#d3e2f6"></div>
<div class="abs navy" style="left:179.800px;top:300.500px;width:759.200px;height:20.500px"></div>
<svg class="abs" style="left:182.8px;top:302.500px" width="17.500" height="16.500" viewBox="0 0 17.500 16.500"><rect x=".7" y=".7" width="16.100" height="15.100" rx="5" fill="#232c3c" stroke="#4e9fd6" stroke-width="1.400"/><rect x="5" y="4.500" width="6" height="6" fill="none" stroke="#c9ced6" stroke-width="1"/><rect x="7" y="6.500" width="6" height="6" fill="#232c3c" stroke="#fff" stroke-width="1"/></svg>
<svg class="abs" style="left:203px;top:302.500px" width="17.500" height="16.500" viewBox="0 0 17.500 16.500"><rect x=".7" y=".7" width="16.100" height="15.100" rx="5" fill="#232c3c" stroke="#4e9fd6" stroke-width="1.400"/><rect x="4.800" y="5.200" width="8" height="6.200" fill="none" stroke="#fff" stroke-width="1"/><rect x="5.300" y="9" width="7" height="2.400" fill="#fff"/></svg>
<svg class="abs" style="left:222.8px;top:302.500px" width="17.500" height="16.500" viewBox="0 0 17.500 16.500"><rect x=".7" y=".7" width="16.100" height="15.100" rx="5" fill="#232c3c" stroke="#4e9fd6" stroke-width="1.400"/><path d="M11 4.800H5v7.400h7.400V9" fill="none" stroke="#fff" stroke-width="1"/><path d="M8.400 9L12.600 4.600M9.800 4.300h3.100v3.100" fill="none" stroke="#fff" stroke-width="1.100"/></svg>
<div class="abs wt" style="left:244.3px;top:302.500px;width:90px;height:17px;border:1.500px solid #4e9fd6;border-radius:5px;background:#232c3c;font-weight:bold;font-size:8px;line-height:13.500px;text-align:center;letter-spacing:-.2px">Google Earth</div>
<div class="abs wt" style="left:337px;top:302.500px;width:91px;height:17px;border:1.500px solid #4e9fd6;border-radius:5px;background:#232c3c;font-weight:bold;font-size:8px;line-height:13.500px;text-align:center;letter-spacing:-.2px">Estado de Reporte</div>
<div class="abs wt" style="left:430.5px;top:302.500px;width:89px;height:17px;border:1.500px solid #4e9fd6;border-radius:5px;background:#232c3c;font-weight:bold;font-size:8px;line-height:13.500px;text-align:center;letter-spacing:-.2px">✓Reporte Imprimible</div>
<div class="abs wt" style="left:522.5px;top:302.500px;width:89px;height:17px;border:1.500px solid #4e9fd6;border-radius:5px;background:#232c3c;font-weight:bold;font-size:8px;line-height:13.500px;text-align:center;letter-spacing:-.2px">✓ Exportar Reportes</div>
<div class="abs" style="left:180.500px;top:321px;width:758.500px;height:1.500px;background:#f2f7fd"></div>
<div class="abs" style="left:182px;top:322.500px;width:757px;height:12.500px;background:linear-gradient(#e6effb,#d3e3f8);border-bottom:1px solid #b5cbe8"></div>
<div class="abs" style="left:182px;top:322.500px;width:160px;height:13px;background:linear-gradient(#e9f1fc,#d6e4f7);border:1px solid #b4c9e8;border-top:none;border-bottom:2px solid #a6bfe2"></div>
<div class="abs" style="left:275px;top:322.500px;font-weight:bold;font-size:7.600px;line-height:11px;color:#1a1a1a;white-space:nowrap">Ñandú</div>
<svg class="abs" style="left:299.500px;top:325px" width="7" height="7" viewBox="0 0 7 7"><circle cx="3.500" cy="3.500" r="3" fill="#6cb33e" stroke="#4b8a28" stroke-width=".6"/><circle cx="3.500" cy="3.500" r="1.200" fill="#d6efc4"/></svg>
<svg class="abs" style="left:333px;top:323.500px" width="7" height="7" viewBox="0 0 7 7"><rect x=".5" y=".5" width="6" height="6" rx="1" fill="#e9f0fb" stroke="#c3cfe2" stroke-width=".7"/><path d="M2 2l3 3M5 2l-3 3" stroke="#bcc7d8" stroke-width=".8"/></svg>
<div class="abs" style="left:182px;top:339px;width:757px;height:12.500px;background:linear-gradient(#e6effb,#d3e3f8);border-bottom:1px solid #b5cbe8"></div>
<div class="abs" style="left:182px;top:339px;width:128.700px;height:13px;background:linear-gradient(#e9f1fc,#d6e4f7);border:1px solid #b4c9e8;border-top:none;border-bottom:2px solid #a6bfe2"></div>
<div class="abs" style="left:221.500px;top:339.300px;font-weight:bold;font-size:7.600px;line-height:11px;color:#1a1a1a;white-space:nowrap;letter-spacing:-.15px">Recorrido (69)</div>
<svg class="abs" style="left:302.500px;top:340.500px" width="7" height="7" viewBox="0 0 7 7"><rect x=".5" y=".5" width="6" height="6" rx="1" fill="#e9f0fb" stroke="#c3cfe2" stroke-width=".7"/><path d="M2 2l3 3M5 2l-3 3" stroke="#bcc7d8" stroke-width=".8"/></svg>
<div class="abs" style="left:182px;top:355.5px;width:746.6px;height:26.899999999999977px;background:#d4d4d4"></div>
<div class="abs" style="left:182px;top:382.4px;width:746.6px;height:119.60000000000002px;background:#e8e8fb"></div>
<div class="abs gh" style="left:185.2px;top:364.8px;transform:scaleX(0.916)">Lat</div>
<div class="abs gh" style="left:223.6px;top:364.8px;transform:scaleX(0.919)">Lon</div>
<div class="abs gh" style="left:263.0px;top:364.8px;transform:scaleX(0.874)">Fecha</div>
<div class="abs gh" style="left:304.5px;top:364.8px;transform:scaleX(0.881)">Hora</div>
<div class="abs gh" style="left:336.7px;top:364.8px;transform:scaleX(0.973)">Velocidad</div>
<div class="abs gh" style="left:375.59999999999997px;top:364.8px;transform:scaleX(0.941)">Odómetro</div>
<div class="abs gh" style="left:414.8px;top:364.8px;transform:scaleX(0.925)">Distancia</div>
<div class="abs gh" style="left:451.5px;top:364.8px;transform:scaleX(0.726)">GPS</div>
<div class="abs gh" style="left:489.2px;top:364.8px;transform:scaleX(0.982)">Dirección</div>
<div class="abs gh" style="left:650.4000000000001px;top:364.8px;transform:scaleX(0.872)">Estado</div>
<div class="abs gh" style="left:719.8000000000001px;top:364.8px;transform:scaleX(0.965)">Orientación</div>
<div class="abs gh" style="left:764.6px;top:364.8px;transform:scaleX(0.939)">Bateria</div>
<div class="abs gh" style="left:794.7px;top:364.8px;transform:scaleX(0.861)">Combu.</div>
<div class="abs gh" style="left:825.7px;top:364.8px;transform:scaleX(0.966)">Nivel.</div>
<div class="abs gh" style="left:851.9000000000001px;top:364.8px;transform:scaleX(0.96)">Motor</div>
<div class="abs" style="left:896.900px;top:359.300px"><svg width="29" height="20" viewBox="0 0 29 20" style="display:block"><path d="M0 3.400L8.600 0V17.200L.3 19.700z" fill="#80aa20"/><path d="M8.600 0L15.200 4.100V20L8.600 17.200z" fill="#e9a63c"/><path d="M15.200 4.100L21.700 0V16.900L15.200 20z" fill="#b9a08c"/><path d="M21.700 0L29 4.100V19.700L21.700 16.900z" fill="#eaa93f"/><path d="M9.500 3l3 2.500l-2 4l3.500 2M10 13l4 1.500M23 3l3 4l-2 5l4 3M23 12l2 3" stroke="#f6d48a" stroke-width="1.300" fill="none"/><path d="M10.500 16.500l3 1.800l1-3z" fill="#f4f0dc"/><path d="M16.500 6l2 3l-1.500 4l3 3M19 4l1.500 5" stroke="#a7b9c8" stroke-width="1.200" fill="none"/><path d="M16 9l4-2M17 16l4-4" stroke="#b5682c" stroke-width=".9" fill="none"/><path d="M8.600 0V17.200M15.200 4.100V20M21.700 0V16.900" stroke="#caa873" stroke-width=".5"/><text transform="translate(7 17) rotate(-90)" font-family="Liberation Sans,sans-serif" font-size="6.400" font-weight="bold" fill="#1c3006" textLength="13" lengthAdjust="spacingAndGlyphs">MAPA</text></svg></div>
<div class="abs gc" style="left:185.2px;top:393.0px;transform:scaleX(0.799);">-0.023853</div>
<div class="abs gc" style="left:223.6px;top:393.0px;transform:scaleX(0.824);">-78.453543</div>
<div class="abs gc" style="left:263.0px;top:393.0px;transform:scaleX(0.906);">2019/12/26</div>
<div class="abs gc" style="left:304.5px;top:393.0px;transform:scaleX(0.851);">00:45:36</div>
<div class="abs gc" style="left:336.7px;top:393.0px;transform:scaleX(0.841);">0</div>
<div class="abs gc" style="left:375.59999999999997px;top:393.0px;transform:scaleX(0.861);">35,276.0</div>
<div class="abs gc" style="left:414.8px;top:393.0px;transform:scaleX(0.897);">0.0</div>
<div class="abs gc" style="left:451.5px;top:393.0px;transform:scaleX(0.863);">OK</div>
<div class="abs gc" style="left:489.5px;top:389.09999999999997px;line-height:8.100px;transform:scaleX(0.827)">SAN ANTONIO, CALLE 13 DE JUNIO y CALLE SIN<br>NOMBRE</div>
<div class="abs gc" style="left:650.8000000000001px;top:386.29999999999995px;transform:scaleX(0.89);">Estacionado</div>
<div class="abs" style="left:651.8000000000001px;top:395.2px"><svg width="11" height="13" viewBox="0 0 11 13" style="display:block"><path d="M5.500 10v2.600" stroke="#6b1a1a" stroke-width=".9"/><path d="M3.400 .4h4.200l3 3v4.200l-3 3H3.400l-3-3V3.400z" fill="#e3101c"/><text x="5.500" y="6.900" text-anchor="middle" font-family="Liberation Sans,sans-serif" font-size="3.900" font-weight="bold" fill="#fff" textLength="8.400" lengthAdjust="spacingAndGlyphs">STOP</text></svg></div>
<div class="abs" style="left:719.6px;top:391.59999999999997px"><svg width="11" height="11" viewBox="0 0 11 11" style="display:block"><path d="M3.400 .4h4.200l3 3v4.200l-3 3H3.400l-3-3V3.400z" fill="#f0121d"/><text x="5.500" y="6.900" text-anchor="middle" font-family="Liberation Sans,sans-serif" font-size="3.900" font-weight="bold" fill="#fff" textLength="8.400" lengthAdjust="spacingAndGlyphs">STOP</text></svg></div>
<div class="abs gc" style="left:765.0px;top:393.0px;transform:scaleX(0.806);">90</div>
<div class="abs gc" style="left:795.1px;top:393.0px;transform:scaleX(0.858);">-</div>
<div class="abs gc" style="left:826.1px;top:393.0px;transform:scaleX(0.858);">-</div>
<div class="abs gc" style="left:852.1px;top:386.29999999999995px;transform:scaleX(0.86);">Apagado</div>
<div class="abs" style="left:852.1px;top:394.59999999999997px"><svg width="14" height="14" viewBox="0 0 14 14" style="display:block"><circle cx="4.300" cy="4.300" r="3.600" fill="#c8141c"/><circle cx="4.100" cy="4.100" r="2" fill="#8a6a72"/><path d="M6.500 6.500l5.600 5.400" stroke="#c8141c" stroke-width="2.200" stroke-linecap="round"/><path d="M9.600 11.400l1.300-1.300" stroke="#c8141c" stroke-width="1.300"/></svg></div>
<div class="abs" style="left:896.900px;top:386.9px"><svg width="29" height="20" viewBox="0 0 29 20" style="display:block"><path d="M0 3.400L8.600 0V17.200L.3 19.700z" fill="#80aa20"/><path d="M8.600 0L15.200 4.100V20L8.600 17.200z" fill="#e9a63c"/><path d="M15.200 4.100L21.700 0V16.900L15.200 20z" fill="#b9a08c"/><path d="M21.700 0L29 4.100V19.700L21.700 16.900z" fill="#eaa93f"/><path d="M9.500 3l3 2.500l-2 4l3.500 2M10 13l4 1.500M23 3l3 4l-2 5l4 3M23 12l2 3" stroke="#f6d48a" stroke-width="1.300" fill="none"/><path d="M10.500 16.500l3 1.800l1-3z" fill="#f4f0dc"/><path d="M16.500 6l2 3l-1.500 4l3 3M19 4l1.500 5" stroke="#a7b9c8" stroke-width="1.200" fill="none"/><path d="M16 9l4-2M17 16l4-4" stroke="#b5682c" stroke-width=".9" fill="none"/><path d="M8.600 0V17.200M15.200 4.100V20M21.700 0V16.900" stroke="#caa873" stroke-width=".5"/><text transform="translate(7 17) rotate(-90)" font-family="Liberation Sans,sans-serif" font-size="6.400" font-weight="bold" fill="#1c3006" textLength="13" lengthAdjust="spacingAndGlyphs">MAPA</text></svg></div>
<div class="abs gc" style="left:185.2px;top:421.0px;transform:scaleX(0.799);">-0.023853</div>
<div class="abs gc" style="left:223.6px;top:421.0px;transform:scaleX(0.824);">-78.453543</div>
<div class="abs gc" style="left:263.0px;top:421.0px;transform:scaleX(0.906);">2019/12/26</div>
<div class="abs gc" style="left:304.5px;top:421.0px;transform:scaleX(0.851);">01:45:30</div>
<div class="abs gc" style="left:336.7px;top:421.0px;transform:scaleX(0.841);">0</div>
<div class="abs gc" style="left:375.59999999999997px;top:421.0px;transform:scaleX(0.861);">35,276.0</div>
<div class="abs gc" style="left:414.8px;top:421.0px;transform:scaleX(0.897);">0.0</div>
<div class="abs gc" style="left:451.5px;top:421.0px;transform:scaleX(0.863);">OK</div>
<div class="abs gc" style="left:489.5px;top:417.09999999999997px;line-height:8.100px;transform:scaleX(0.827)">SAN ANTONIO, CALLE 13 DE JUNIO y CALLE SIN<br>NOMBRE</div>
<div class="abs gc" style="left:650.8000000000001px;top:414.29999999999995px;transform:scaleX(0.89);">Estacionado</div>
<div class="abs" style="left:651.8000000000001px;top:423.2px"><svg width="11" height="13" viewBox="0 0 11 13" style="display:block"><path d="M5.500 10v2.600" stroke="#6b1a1a" stroke-width=".9"/><path d="M3.400 .4h4.200l3 3v4.200l-3 3H3.400l-3-3V3.400z" fill="#e3101c"/><text x="5.500" y="6.900" text-anchor="middle" font-family="Liberation Sans,sans-serif" font-size="3.900" font-weight="bold" fill="#fff" textLength="8.400" lengthAdjust="spacingAndGlyphs">STOP</text></svg></div>
<div class="abs" style="left:719.6px;top:419.59999999999997px"><svg width="11" height="11" viewBox="0 0 11 11" style="display:block"><path d="M3.400 .4h4.200l3 3v4.200l-3 3H3.400l-3-3V3.400z" fill="#f0121d"/><text x="5.500" y="6.900" text-anchor="middle" font-family="Liberation Sans,sans-serif" font-size="3.900" font-weight="bold" fill="#fff" textLength="8.400" lengthAdjust="spacingAndGlyphs">STOP</text></svg></div>
<div class="abs gc" style="left:765.0px;top:421.0px;transform:scaleX(0.806);">90</div>
<div class="abs gc" style="left:795.1px;top:421.0px;transform:scaleX(0.858);">-</div>
<div class="abs gc" style="left:826.1px;top:421.0px;transform:scaleX(0.858);">-</div>
<div class="abs gc" style="left:852.1px;top:414.29999999999995px;transform:scaleX(0.86);">Apagado</div>
<div class="abs" style="left:852.1px;top:422.59999999999997px"><svg width="14" height="14" viewBox="0 0 14 14" style="display:block"><circle cx="4.300" cy="4.300" r="3.600" fill="#c8141c"/><circle cx="4.100" cy="4.100" r="2" fill="#8a6a72"/><path d="M6.500 6.500l5.600 5.400" stroke="#c8141c" stroke-width="2.200" stroke-linecap="round"/><path d="M9.600 11.400l1.300-1.300" stroke="#c8141c" stroke-width="1.300"/></svg></div>
<div class="abs" style="left:896.900px;top:414.9px"><svg width="29" height="20" viewBox="0 0 29 20" style="display:block"><path d="M0 3.400L8.600 0V17.200L.3 19.700z" fill="#80aa20"/><path d="M8.600 0L15.200 4.100V20L8.600 17.200z" fill="#e9a63c"/><path d="M15.200 4.100L21.700 0V16.900L15.200 20z" fill="#b9a08c"/><path d="M21.700 0L29 4.100V19.700L21.700 16.900z" fill="#eaa93f"/><path d="M9.500 3l3 2.500l-2 4l3.500 2M10 13l4 1.500M23 3l3 4l-2 5l4 3M23 12l2 3" stroke="#f6d48a" stroke-width="1.300" fill="none"/><path d="M10.500 16.500l3 1.800l1-3z" fill="#f4f0dc"/><path d="M16.500 6l2 3l-1.500 4l3 3M19 4l1.500 5" stroke="#a7b9c8" stroke-width="1.200" fill="none"/><path d="M16 9l4-2M17 16l4-4" stroke="#b5682c" stroke-width=".9" fill="none"/><path d="M8.600 0V17.200M15.200 4.100V20M21.700 0V16.900" stroke="#caa873" stroke-width=".5"/><text transform="translate(7 17) rotate(-90)" font-family="Liberation Sans,sans-serif" font-size="6.400" font-weight="bold" fill="#1c3006" textLength="13" lengthAdjust="spacingAndGlyphs">MAPA</text></svg></div>
<div class="abs gc" style="left:185.2px;top:449.0px;transform:scaleX(0.799);">-0.023853</div>
<div class="abs gc" style="left:223.6px;top:449.0px;transform:scaleX(0.824);">-78.453543</div>
<div class="abs gc" style="left:263.0px;top:449.0px;transform:scaleX(0.906);">2019/12/26</div>
<div class="abs gc" style="left:304.5px;top:449.0px;transform:scaleX(0.851);">02:45:24</div>
<div class="abs gc" style="left:336.7px;top:449.0px;transform:scaleX(0.841);">0</div>
<div class="abs gc" style="left:375.59999999999997px;top:449.0px;transform:scaleX(0.861);">35,276.0</div>
<div class="abs gc" style="left:414.8px;top:449.0px;transform:scaleX(0.897);">0.0</div>
<div class="abs gc" style="left:451.5px;top:449.0px;transform:scaleX(0.863);">OK</div>
<div class="abs gc" style="left:489.5px;top:445.09999999999997px;line-height:8.100px;transform:scaleX(0.827)">SAN ANTONIO, CALLE 13 DE JUNIO y CALLE SIN<br>NOMBRE</div>
<div class="abs gc" style="left:650.8000000000001px;top:442.29999999999995px;transform:scaleX(0.89);">Estacionado</div>
<div class="abs" style="left:651.8000000000001px;top:451.2px"><svg width="11" height="13" viewBox="0 0 11 13" style="display:block"><path d="M5.500 10v2.600" stroke="#6b1a1a" stroke-width=".9"/><path d="M3.400 .4h4.200l3 3v4.200l-3 3H3.400l-3-3V3.400z" fill="#e3101c"/><text x="5.500" y="6.900" text-anchor="middle" font-family="Liberation Sans,sans-serif" font-size="3.900" font-weight="bold" fill="#fff" textLength="8.400" lengthAdjust="spacingAndGlyphs">STOP</text></svg></div>
<div class="abs" style="left:719.6px;top:447.59999999999997px"><svg width="11" height="11" viewBox="0 0 11 11" style="display:block"><path d="M3.400 .4h4.200l3 3v4.200l-3 3H3.400l-3-3V3.400z" fill="#f0121d"/><text x="5.500" y="6.900" text-anchor="middle" font-family="Liberation Sans,sans-serif" font-size="3.900" font-weight="bold" fill="#fff" textLength="8.400" lengthAdjust="spacingAndGlyphs">STOP</text></svg></div>
<div class="abs gc" style="left:765.0px;top:449.0px;transform:scaleX(0.806);">90</div>
<div class="abs gc" style="left:795.1px;top:449.0px;transform:scaleX(0.858);">-</div>
<div class="abs gc" style="left:826.1px;top:449.0px;transform:scaleX(0.858);">-</div>
<div class="abs gc" style="left:852.1px;top:442.29999999999995px;transform:scaleX(0.86);">Apagado</div>
<div class="abs" style="left:852.1px;top:450.59999999999997px"><svg width="14" height="14" viewBox="0 0 14 14" style="display:block"><circle cx="4.300" cy="4.300" r="3.600" fill="#c8141c"/><circle cx="4.100" cy="4.100" r="2" fill="#8a6a72"/><path d="M6.500 6.500l5.600 5.400" stroke="#c8141c" stroke-width="2.200" stroke-linecap="round"/><path d="M9.600 11.400l1.300-1.300" stroke="#c8141c" stroke-width="1.300"/></svg></div>
<div class="abs" style="left:896.900px;top:442.9px"><svg width="29" height="20" viewBox="0 0 29 20" style="display:block"><path d="M0 3.400L8.600 0V17.200L.3 19.700z" fill="#80aa20"/><path d="M8.600 0L15.200 4.100V20L8.600 17.200z" fill="#e9a63c"/><path d="M15.200 4.100L21.700 0V16.900L15.200 20z" fill="#b9a08c"/><path d="M21.700 0L29 4.100V19.700L21.700 16.900z" fill="#eaa93f"/><path d="M9.500 3l3 2.500l-2 4l3.500 2M10 13l4 1.500M23 3l3 4l-2 5l4 3M23 12l2 3" stroke="#f6d48a" stroke-width="1.300" fill="none"/><path d="M10.500 16.500l3 1.800l1-3z" fill="#f4f0dc"/><path d="M16.500 6l2 3l-1.500 4l3 3M19 4l1.500 5" stroke="#a7b9c8" stroke-width="1.200" fill="none"/><path d="M16 9l4-2M17 16l4-4" stroke="#b5682c" stroke-width=".9" fill="none"/><path d="M8.600 0V17.200M15.200 4.100V20M21.700 0V16.900" stroke="#caa873" stroke-width=".5"/><text transform="translate(7 17) rotate(-90)" font-family="Liberation Sans,sans-serif" font-size="6.400" font-weight="bold" fill="#1c3006" textLength="13" lengthAdjust="spacingAndGlyphs">MAPA</text></svg></div>
<div class="abs gc" style="left:185.2px;top:476.90000000000003px;transform:scaleX(0.799);">-0.023853</div>
<div class="abs gc" style="left:223.6px;top:476.90000000000003px;transform:scaleX(0.824);">-78.453543</div>
<div class="abs gc" style="left:263.0px;top:476.90000000000003px;transform:scaleX(0.906);">2019/12/26</div>
<div class="abs gc" style="left:304.5px;top:476.90000000000003px;transform:scaleX(0.851);">03:45:21</div>
<div class="abs gc" style="left:336.7px;top:476.90000000000003px;transform:scaleX(0.841);">0</div>
<div class="abs gc" style="left:375.59999999999997px;top:476.90000000000003px;transform:scaleX(0.861);">35,276.0</div>
<div class="abs gc" style="left:414.8px;top:476.90000000000003px;transform:scaleX(0.897);">0.0</div>
<div class="abs gc" style="left:451.5px;top:476.90000000000003px;transform:scaleX(0.863);">OK</div>
<div class="abs gc" style="left:489.5px;top:473.0px;line-height:8.100px;transform:scaleX(0.827)">SAN ANTONIO, CALLE 13 DE JUNIO y CALLE SIN<br>NOMBRE</div>
<div class="abs gc" style="left:650.8000000000001px;top:470.2px;transform:scaleX(0.89);">Estacionado</div>
<div class="abs" style="left:651.8000000000001px;top:479.1px"><svg width="11" height="13" viewBox="0 0 11 13" style="display:block"><path d="M5.500 10v2.600" stroke="#6b1a1a" stroke-width=".9"/><path d="M3.400 .4h4.200l3 3v4.200l-3 3H3.400l-3-3V3.400z" fill="#e3101c"/><text x="5.500" y="6.900" text-anchor="middle" font-family="Liberation Sans,sans-serif" font-size="3.900" font-weight="bold" fill="#fff" textLength="8.400" lengthAdjust="spacingAndGlyphs">STOP</text></svg></div>
<div class="abs" style="left:719.6px;top:475.5px"><svg width="11" height="11" viewBox="0 0 11 11" style="display:block"><path d="M3.400 .4h4.200l3 3v4.200l-3 3H3.400l-3-3V3.400z" fill="#f0121d"/><text x="5.500" y="6.900" text-anchor="middle" font-family="Liberation Sans,sans-serif" font-size="3.900" font-weight="bold" fill="#fff" textLength="8.400" lengthAdjust="spacingAndGlyphs">STOP</text></svg></div>
<div class="abs gc" style="left:765.0px;top:476.90000000000003px;transform:scaleX(0.806);">90</div>
<div class="abs gc" style="left:795.1px;top:476.90000000000003px;transform:scaleX(0.858);">-</div>
<div class="abs gc" style="left:826.1px;top:476.90000000000003px;transform:scaleX(0.858);">-</div>
<div class="abs gc" style="left:852.1px;top:470.2px;transform:scaleX(0.86);">Apagado</div>
<div class="abs" style="left:852.1px;top:478.5px"><svg width="14" height="14" viewBox="0 0 14 14" style="display:block"><circle cx="4.300" cy="4.300" r="3.600" fill="#c8141c"/><circle cx="4.100" cy="4.100" r="2" fill="#8a6a72"/><path d="M6.500 6.500l5.600 5.400" stroke="#c8141c" stroke-width="2.200" stroke-linecap="round"/><path d="M9.600 11.400l1.300-1.300" stroke="#c8141c" stroke-width="1.300"/></svg></div>
<div class="abs" style="left:896.900px;top:470.8px"><svg width="29" height="20" viewBox="0 0 29 20" style="display:block"><path d="M0 3.400L8.600 0V17.200L.3 19.700z" fill="#80aa20"/><path d="M8.600 0L15.200 4.100V20L8.600 17.200z" fill="#e9a63c"/><path d="M15.200 4.100L21.700 0V16.900L15.200 20z" fill="#b9a08c"/><path d="M21.700 0L29 4.100V19.700L21.700 16.900z" fill="#eaa93f"/><path d="M9.500 3l3 2.500l-2 4l3.500 2M10 13l4 1.500M23 3l3 4l-2 5l4 3M23 12l2 3" stroke="#f6d48a" stroke-width="1.300" fill="none"/><path d="M10.500 16.500l3 1.800l1-3z" fill="#f4f0dc"/><path d="M16.500 6l2 3l-1.500 4l3 3M19 4l1.500 5" stroke="#a7b9c8" stroke-width="1.200" fill="none"/><path d="M16 9l4-2M17 16l4-4" stroke="#b5682c" stroke-width=".9" fill="none"/><path d="M8.600 0V17.200M15.200 4.100V20M21.700 0V16.900" stroke="#caa873" stroke-width=".5"/><text transform="translate(7 17) rotate(-90)" font-family="Liberation Sans,sans-serif" font-size="6.400" font-weight="bold" fill="#1c3006" textLength="13" lengthAdjust="spacingAndGlyphs">MAPA</text></svg></div>
<div class="abs gc" style="left:185.2px;top:504.8px;transform:scaleX(0.799);">-0.023853</div>
<div class="abs gc" style="left:223.6px;top:504.8px;transform:scaleX(0.824);">-78.453543</div>
<div class="abs gc" style="left:263.0px;top:504.8px;transform:scaleX(0.906);">2019/12/26</div>
<div class="abs gc" style="left:304.5px;top:504.8px;transform:scaleX(0.851);">04:45:18</div>
<div class="abs gc" style="left:336.7px;top:504.8px;transform:scaleX(0.841);">0</div>
<div class="abs gc" style="left:375.59999999999997px;top:504.8px;transform:scaleX(0.861);">35,276.0</div>
<div class="abs gc" style="left:414.8px;top:504.8px;transform:scaleX(0.897);">0.0</div>
<div class="abs gc" style="left:451.5px;top:504.8px;transform:scaleX(0.863);">OK</div>
<div class="abs gc" style="left:489.5px;top:500.9px;line-height:8.100px;transform:scaleX(0.827)">SAN ANTONIO, CALLE 13 DE JUNIO y CALLE SIN<br>NOMBRE</div>
<div class="abs gc" style="left:650.8000000000001px;top:498.09999999999997px;transform:scaleX(0.89);">Estacionado</div>
<div class="abs" style="left:651.8000000000001px;top:507.0px"><svg width="11" height="13" viewBox="0 0 11 13" style="display:block"><path d="M5.500 10v2.600" stroke="#6b1a1a" stroke-width=".9"/><path d="M3.400 .4h4.200l3 3v4.200l-3 3H3.400l-3-3V3.400z" fill="#e3101c"/><text x="5.500" y="6.900" text-anchor="middle" font-family="Liberation Sans,sans-serif" font-size="3.900" font-weight="bold" fill="#fff" textLength="8.400" lengthAdjust="spacingAndGlyphs">STOP</text></svg></div>
<div class="abs" style="left:719.6px;top:503.4px"><svg width="11" height="11" viewBox="0 0 11 11" style="display:block"><path d="M3.400 .4h4.200l3 3v4.200l-3 3H3.400l-3-3V3.400z" fill="#f0121d"/><text x="5.500" y="6.900" text-anchor="middle" font-family="Liberation Sans,sans-serif" font-size="3.900" font-weight="bold" fill="#fff" textLength="8.400" lengthAdjust="spacingAndGlyphs">STOP</text></svg></div>
<div class="abs gc" style="left:765.0px;top:504.8px;transform:scaleX(0.806);">90</div>
<div class="abs gc" style="left:795.1px;top:504.8px;transform:scaleX(0.858);">-</div>
<div class="abs gc" style="left:826.1px;top:504.8px;transform:scaleX(0.858);">-</div>
<div class="abs gc" style="left:852.1px;top:498.09999999999997px;transform:scaleX(0.86);">Apagado</div>
<div class="abs" style="left:852.1px;top:506.4px"><svg width="14" height="14" viewBox="0 0 14 14" style="display:block"><circle cx="4.300" cy="4.300" r="3.600" fill="#c8141c"/><circle cx="4.100" cy="4.100" r="2" fill="#8a6a72"/><path d="M6.500 6.500l5.600 5.400" stroke="#c8141c" stroke-width="2.200" stroke-linecap="round"/><path d="M9.600 11.400l1.300-1.300" stroke="#c8141c" stroke-width="1.300"/></svg></div>
<div class="abs" style="left:896.900px;top:498.7px"><svg width="29" height="20" viewBox="0 0 29 20" style="display:block"><path d="M0 3.400L8.600 0V17.200L.3 19.700z" fill="#80aa20"/><path d="M8.600 0L15.200 4.100V20L8.600 17.200z" fill="#e9a63c"/><path d="M15.200 4.100L21.700 0V16.900L15.200 20z" fill="#b9a08c"/><path d="M21.700 0L29 4.100V19.700L21.700 16.900z" fill="#eaa93f"/><path d="M9.500 3l3 2.500l-2 4l3.500 2M10 13l4 1.500M23 3l3 4l-2 5l4 3M23 12l2 3" stroke="#f6d48a" stroke-width="1.300" fill="none"/><path d="M10.500 16.500l3 1.800l1-3z" fill="#f4f0dc"/><path d="M16.500 6l2 3l-1.500 4l3 3M19 4l1.500 5" stroke="#a7b9c8" stroke-width="1.200" fill="none"/><path d="M16 9l4-2M17 16l4-4" stroke="#b5682c" stroke-width=".9" fill="none"/><path d="M8.600 0V17.200M15.200 4.100V20M21.700 0V16.900" stroke="#caa873" stroke-width=".5"/><text transform="translate(7 17) rotate(-90)" font-family="Liberation Sans,sans-serif" font-size="6.400" font-weight="bold" fill="#1c3006" textLength="13" lengthAdjust="spacingAndGlyphs">MAPA</text></svg></div>
<div class="abs" style="left:182px;top:355.0px;width:746.6px;height:1.500px;background:#5f5f68"></div>
<div class="abs" style="left:182px;top:381.9px;width:746.6px;height:1.500px;background:#5f5f68"></div>
<div class="abs" style="left:182px;top:409.9px;width:746.6px;height:1.500px;background:#5f5f68"></div>
<div class="abs" style="left:182px;top:437.9px;width:746.6px;height:1.500px;background:#5f5f68"></div>
<div class="abs" style="left:182px;top:465.8px;width:746.6px;height:1.500px;background:#5f5f68"></div>
<div class="abs" style="left:182px;top:493.7px;width:746.6px;height:1.500px;background:#5f5f68"></div>
<div class="abs" style="left:181.3px;top:355.5px;width:1.400px;height:146.5px;background:#5f5f68"></div>
<div class="abs" style="left:219.70000000000002px;top:355.5px;width:1.400px;height:146.5px;background:#5f5f68"></div>
<div class="abs" style="left:259.1px;top:355.5px;width:1.400px;height:146.5px;background:#5f5f68"></div>
<div class="abs" style="left:300.6px;top:355.5px;width:1.400px;height:146.5px;background:#5f5f68"></div>
<div class="abs" style="left:332.8px;top:355.5px;width:1.400px;height:146.5px;background:#5f5f68"></div>
<div class="abs" style="left:371.7px;top:355.5px;width:1.400px;height:146.5px;background:#5f5f68"></div>
<div class="abs" style="left:410.90000000000003px;top:355.5px;width:1.400px;height:146.5px;background:#5f5f68"></div>
<div class="abs" style="left:447.6px;top:355.5px;width:1.400px;height:146.5px;background:#5f5f68"></div>
<div class="abs" style="left:485.3px;top:355.5px;width:1.400px;height:146.5px;background:#5f5f68"></div>
<div class="abs" style="left:646.5px;top:355.5px;width:1.400px;height:146.5px;background:#5f5f68"></div>
<div class="abs" style="left:715.9px;top:355.5px;width:1.400px;height:146.5px;background:#5f5f68"></div>
<div class="abs" style="left:760.6999999999999px;top:355.5px;width:1.400px;height:146.5px;background:#5f5f68"></div>
<div class="abs" style="left:790.8px;top:355.5px;width:1.400px;height:146.5px;background:#5f5f68"></div>
<div class="abs" style="left:821.8px;top:355.5px;width:1.400px;height:146.5px;background:#5f5f68"></div>
<div class="abs" style="left:848.0px;top:355.5px;width:1.400px;height:146.5px;background:#5f5f68"></div>
<div class="abs" style="left:892.5px;top:355.5px;width:1.400px;height:146.5px;background:#5f5f68"></div>
<div class="abs" style="left:927.9px;top:355.5px;width:1.400px;height:146.5px;background:#5f5f68"></div>
<div class="abs" style="left:929.300px;top:355px;width:9.700px;height:141px;background:#f6f6f6"></div>
<div class="abs" style="left:930.600px;top:365.500px;width:8px;height:8.500px;background:#fdfdfd;border:1px solid #a9a9a9;border-radius:1.500px"></div>
<div class="tri" style="left:931.800px;top:358px;border-bottom:3px solid #444;border-left:2.500px solid transparent;border-right:2.500px solid transparent"></div>
<div class="tri" style="left:931.800px;top:491px;border-top:3px solid #444;border-left:2.500px solid transparent;border-right:2.500px solid transparent"></div>
<!--/GRID-->
<!--BOTTOM-->
<div class="abs" style="left:0;top:500px;width:941px;height:9px;background:#fff"></div>
<div class="abs" style="left:17px;top:501.800px;width:922px;height:4.200px;background:linear-gradient(#8e949b 0%,#3a3f46 35%,#0c0f13 70%,#000 100%)"></div>
<div class="abs" style="left:110px;top:503px;width:48px;height:3px;background:#e7e7e7;opacity:.85"></div>
<div class="abs" style="left:22px;top:503.500px;width:14px;height:2.500px;background:#9db7cf;border-radius:6px 6px 0 0"></div>
<div class="abs" style="left:70px;top:504.500px;width:4px;height:1.500px;background:#d49b2a"></div>
<div class="abs" style="left:100px;top:504.500px;width:4px;height:1.500px;background:#c63a2a"></div>
<div class="abs" style="left:170px;top:504px;width:8px;height:2px;background:#d8322a"></div>
<div class="abs" style="left:205px;top:504.500px;width:6px;height:1.500px;background:#7fb2dc"></div>
<div class="abs" style="left:228px;top:503.500px;width:60px;height:2.500px;background:#c9ccd0;opacity:.8"></div>
<div class="abs" style="left:515px;top:503px;width:38px;height:3px;background:#b9bdc2;opacity:.8"></div>
<div class="abs" style="left:930px;top:503px;width:9px;height:3px;background:#a9adb3;opacity:.7"></div>
<!--/BOTTOM-->
<!--CALLOUTS-->
<svg class="abs" style="left:0;top:0;pointer-events:none" width="941" height="509" viewBox="0 0 941 509" font-family="Liberation Sans, sans-serif" font-weight="bold" font-style="italic" text-anchor="middle" fill="#0da84a"><defs><linearGradient id="gc9" gradientUnits="userSpaceOnUse" x1="0" y1="131" x2="0" y2="293.2"><stop offset="0" stop-color="#ffffff"/><stop offset="1" stop-color="#b3c6e5"/></linearGradient><linearGradient id="gc8" gradientUnits="userSpaceOnUse" x1="0" y1="158" x2="0" y2="237"><stop offset="0" stop-color="#ffffff"/><stop offset="1" stop-color="#b3c6e5"/></linearGradient><linearGradient id="gc1" gradientUnits="userSpaceOnUse" x1="0" y1="9.1" x2="0" y2="106"><stop offset="0" stop-color="#ffffff"/><stop offset="1" stop-color="#b3c6e5"/></linearGradient><linearGradient id="gc2" gradientUnits="userSpaceOnUse" x1="0" y1="6.4" x2="0" y2="57"><stop offset="0" stop-color="#ffffff"/><stop offset="1" stop-color="#b3c6e5"/></linearGradient><linearGradient id="gc3" gradientUnits="userSpaceOnUse" x1="0" y1="2.3" x2="0" y2="68.9"><stop offset="0" stop-color="#ffffff"/><stop offset="1" stop-color="#b3c6e5"/></linearGradient><linearGradient id="gc4" gradientUnits="userSpaceOnUse" x1="0" y1="105.5" x2="0" y2="177.3"><stop offset="0" stop-color="#ffffff"/><stop offset="1" stop-color="#b3c6e5"/></linearGradient><linearGradient id="gc5" gradientUnits="userSpaceOnUse" x1="0" y1="116" x2="0" y2="185"><stop offset="0" stop-color="#ffffff"/><stop offset="1" stop-color="#b3c6e5"/></linearGradient><linearGradient id="gc6" gradientUnits="userSpaceOnUse" x1="0" y1="104.4" x2="0" y2="174"><stop offset="0" stop-color="#ffffff"/><stop offset="1" stop-color="#b3c6e5"/></linearGradient><linearGradient id="gc7" gradientUnits="userSpaceOnUse" x1="0" y1="203.5" x2="0" y2="233"><stop offset="0" stop-color="#ffffff"/><stop offset="1" stop-color="#b3c6e5"/></linearGradient><linearGradient id="gc10" gradientUnits="userSpaceOnUse" x1="0" y1="253.3" x2="0" y2="302.2"><stop offset="0" stop-color="#ffffff"/><stop offset="1" stop-color="#b3c6e5"/></linearGradient><linearGradient id="gc11" gradientUnits="userSpaceOnUse" x1="0" y1="252.9" x2="0" y2="303.6"><stop offset="0" stop-color="#ffffff"/><stop offset="1" stop-color="#b3c6e5"/></linearGradient><linearGradient id="gc12" gradientUnits="userSpaceOnUse" x1="0" y1="377.4" x2="0" y2="404.2"><stop offset="0" stop-color="#ffffff"/><stop offset="1" stop-color="#b3c6e5"/></linearGradient><linearGradient id="gc13" gradientUnits="userSpaceOnUse" x1="0" y1="418" x2="0" y2="447.2"><stop offset="0" stop-color="#ffffff"/><stop offset="1" stop-color="#b3c6e5"/></linearGradient><linearGradient id="gc14" gradientUnits="userSpaceOnUse" x1="0" y1="442.4" x2="0" y2="469"><stop offset="0" stop-color="#ffffff"/><stop offset="1" stop-color="#b3c6e5"/></linearGradient><filter id="blur" x="-10%" y="-10%" width="120%" height="120%"><feGaussianBlur stdDeviation=".45"/></filter></defs><path d="M-2 264.2H110.3L126.5 131L161.9 264.2H193.7V293.2H-2z" fill="#6f85a8" opacity=".75" transform="translate(1.900 1.900)" filter="url(#blur)"/>
<path d="M-2 264.2H110.3L126.5 131L161.9 264.2H193.7V293.2H-2z" fill="url(#gc9)" stroke="#8aa8dc" stroke-width=".9" stroke-linejoin="miter"/>
<text x="93.7" y="283.09" font-size="13" textLength="154.2" lengthAdjust="spacing">Menú Envió de Mensajes</text>
<path d="M2.4 190.6H20L28 158L44 190.6H105.4V237H2.4z" fill="#6f85a8" opacity=".75" transform="translate(1.900 1.900)" filter="url(#blur)"/>
<path d="M2.4 190.6H20L28 158L44 190.6H105.4V237H2.4z" fill="url(#gc8)" stroke="#8aa8dc" stroke-width=".9" stroke-linejoin="miter"/>
<text x="53.8" y="209.15" font-size="12.6" textLength="82.2" lengthAdjust="spacing">Grupos y Sub</text>
<text x="53.8" y="228.65" font-size="12.6" textLength="45.800000000000004" lengthAdjust="spacing">Grupos</text>
<path d="M7.1 9.1H185.5V38.5H156.6L156.6 106L110.3 38.5H7.1z" fill="#6f85a8" opacity=".75" transform="translate(1.900 1.900)" filter="url(#blur)"/>
<path d="M7.1 9.1H185.5V38.5H156.6L156.6 106L110.3 38.5H7.1z" fill="url(#gc1)" stroke="#8aa8dc" stroke-width=".9" stroke-linejoin="miter"/>
<text x="96" y="27.18" font-size="13" textLength="129.2" lengthAdjust="spacing">Botones Secundarios</text>
<path d="M201 6.4H362.6V45H268.6L258.4 57L228.3 45H201z" fill="#6f85a8" opacity=".75" transform="translate(1.900 1.900)" filter="url(#blur)"/>
<path d="M201 6.4H362.6V45H268.6L258.4 57L228.3 45H201z" fill="url(#gc2)" stroke="#8aa8dc" stroke-width=".9" stroke-linejoin="miter"/>
<text x="281" y="24.68" font-size="13" textLength="119.7" lengthAdjust="spacing">Nombre del Cliente</text>
<path d="M435.4 2.3H622.5V37.3H513.5L385.8 68.9L467.6 37.3H435.4z" fill="#6f85a8" opacity=".75" transform="translate(1.900 1.900)" filter="url(#blur)"/>
<path d="M435.4 2.3H622.5V37.3H513.5L385.8 68.9L467.6 37.3H435.4z" fill="url(#gc3)" stroke="#8aa8dc" stroke-width=".9" stroke-linejoin="miter"/>
<text x="528.2" y="19.48" font-size="13" textLength="143.7" lengthAdjust="spacing">Menú de Herramientas</text>
<path d="M139.2 147H173.2L111 105.5L219.4 147H339.8V177.3H139.2z" fill="#6f85a8" opacity=".75" transform="translate(1.900 1.900)" filter="url(#blur)"/>
<path d="M139.2 147H173.2L111 105.5L219.4 147H339.8V177.3H139.2z" fill="url(#gc4)" stroke="#8aa8dc" stroke-width=".9" stroke-linejoin="miter"/>
<text x="239.8" y="165.29" font-size="13" textLength="143.79999999999998" lengthAdjust="spacing">Búsqueda de Vehículos</text>
<path d="M351.6 156H382.8L382.8 116L428.4 156H535.6V185H351.6z" fill="#6f85a8" opacity=".75" transform="translate(1.900 1.900)" filter="url(#blur)"/>
<path d="M351.6 156H382.8L382.8 116L428.4 156H535.6V185H351.6z" fill="url(#gc5)" stroke="#8aa8dc" stroke-width=".9" stroke-linejoin="miter"/>
<text x="442.5" y="174.99" font-size="13" textLength="135.2" lengthAdjust="spacing">Pestañas de Opciones</text>
<path d="M581.8 125.4H617.8L569.2 104.4L672.3 125.4H799.1V174H581.8z" fill="#6f85a8" opacity=".75" transform="translate(1.900 1.900)" filter="url(#blur)"/>
<path d="M581.8 125.4H617.8L569.2 104.4L672.3 125.4H799.1V174H581.8z" fill="url(#gc6)" stroke="#8aa8dc" stroke-width=".9" stroke-linejoin="miter"/>
<text x="690.7" y="144.42" font-size="13.4" textLength="198.2" lengthAdjust="spacing">Intervalo de verificación Alertas</text>
<text x="690.8" y="164.52" font-size="13.4" textLength="42.0" lengthAdjust="spacing">Sesión</text>
<path d="M676.8 203.5H737.8V233H676.8z" fill="#6f85a8" opacity=".75" transform="translate(1.900 1.900)" filter="url(#blur)"/>
<path d="M676.8 203.5H737.8V233H676.8z" fill="url(#gc7)" stroke="#8aa8dc" stroke-width=".9" stroke-linejoin="miter"/>
<text x="706.2" y="222.13" font-size="14" textLength="38.7" lengthAdjust="spacing">Mapa</text>
<path d="M215.4 253.3H421.8V282.8H301.6L222.8 302.2L250.5 282.8H215.4z" fill="#6f85a8" opacity=".75" transform="translate(1.900 1.900)" filter="url(#blur)"/>
<path d="M215.4 253.3H421.8V282.8H301.6L222.8 302.2L250.5 282.8H215.4z" fill="url(#gc10)" stroke="#8aa8dc" stroke-width=".9" stroke-linejoin="miter"/>
<text x="317.7" y="271.29" font-size="13" textLength="155.0" lengthAdjust="spacing">Botones de Visualización</text>
<path d="M498.7 252.9H777.6V281.8H616L515.7 303.6L544.6 281.8H498.7z" fill="#6f85a8" opacity=".75" transform="translate(1.900 1.900)" filter="url(#blur)"/>
<path d="M498.7 252.9H777.6V281.8H616L515.7 303.6L544.6 281.8H498.7z" fill="url(#gc11)" stroke="#8aa8dc" stroke-width=".9" stroke-linejoin="miter"/>
<text x="637.6" y="270.99" font-size="13" textLength="220.89999999999998" lengthAdjust="spacing">Botones de Impresión y Exportación</text>
<path d="M207.2 377.4H353.2V404.2H207.2V393L181.7 387.6L207.2 380.8z" fill="#6f85a8" opacity=".75" transform="translate(1.900 1.900)" filter="url(#blur)"/>
<path d="M207.2 377.4H353.2V404.2H207.2V393L181.7 387.6L207.2 380.8z" fill="url(#gc12)" stroke="#8aa8dc" stroke-width=".9" stroke-linejoin="miter"/>
<text x="279.5" y="395.29" font-size="13" textLength="107.2" lengthAdjust="spacing">Barra de División</text>
<path d="M456.6 418H605.4V447.2H456.6z" fill="#6f85a8" opacity=".75" transform="translate(1.900 1.900)" filter="url(#blur)"/>
<path d="M456.6 418H605.4V447.2H456.6z" fill="url(#gc13)" stroke="#8aa8dc" stroke-width=".9" stroke-linejoin="miter"/>
<text x="530.1" y="435.29" font-size="13" textLength="111.0" lengthAdjust="spacing">Grilla de Reportes</text>
<path d="M90.3 442.4H169.5V469H90.3V453.5L58 442.4L90.3 442.8z" fill="#6f85a8" opacity=".75" transform="translate(1.900 1.900)" filter="url(#blur)"/>
<path d="M90.3 442.4H169.5V469H90.3V453.5L58 442.4L90.3 442.8z" fill="url(#gc14)" stroke="#8aa8dc" stroke-width=".9" stroke-linejoin="miter"/>
<text x="129" y="460.35" font-size="12.6" textLength="55.2" lengthAdjust="spacing">Reportes</text></svg>
<!--/CALLOUTS-->
</body>
</html>
